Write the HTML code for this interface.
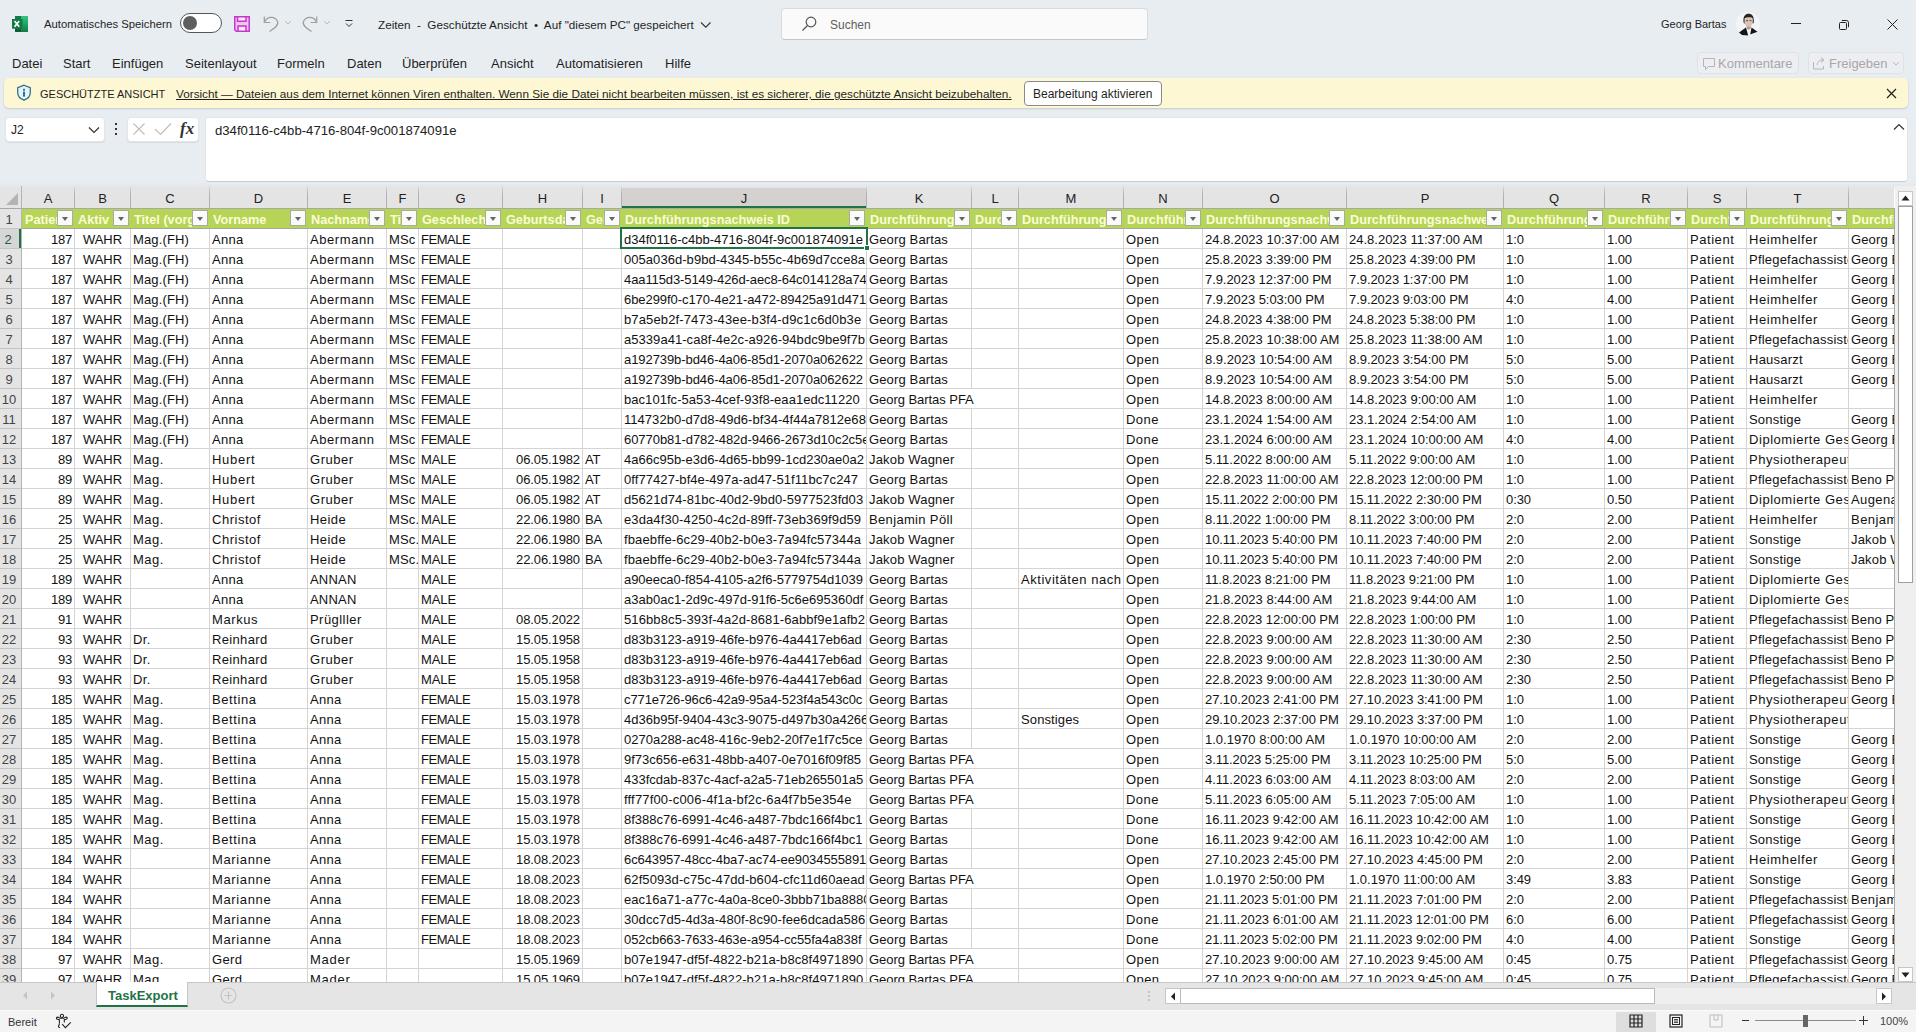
<!DOCTYPE html><html><head><meta charset="utf-8"><title>Zeiten</title><style>*{box-sizing:border-box;margin:0;padding:0}
html,body{width:1916px;height:1032px;overflow:hidden}
body{position:relative;background:#e8edf1;font-family:"Liberation Sans",sans-serif;color:#1f1f1f}
.abs{position:absolute}
.t{position:absolute;white-space:nowrap;line-height:1}
#grid{position:absolute;left:0;top:0;width:1916px;height:1032px;pointer-events:none}
.colhdr{position:absolute;background:#e4e4e4}
.ch{position:absolute;top:188px;height:20px;background:#e4e4e4;font-size:13px;line-height:18px;padding-top:2px;text-align:center;color:#222}
.ch.sel{background:#d3d2d0;border-bottom:2px solid #217346;color:#1e1e1e}
.vl{position:absolute;width:1px;background:linear-gradient(#dcdcdc,#b0b0b0 40%)}
.hlr{position:absolute;left:0;width:21px;height:1px;background:#c4c4c4}
.rh{position:absolute;left:0;width:21px;background:#e4e4e4;font-size:13px;line-height:19px;text-align:center;color:#444;padding:1px 3px 0 0}
.rh.sel{background:#d6d6d6;border-right:2px solid #217346;color:#2d5a43}
.hl{position:absolute;left:0;width:1894px;height:1px;background:#d4d4d4}
.vlb{position:absolute;top:208px;height:774px;width:1px;background:#d4d4d4}
.thdr{position:absolute;height:19px;background:#b6d456}
.hc{position:absolute;height:19px;overflow:hidden;white-space:nowrap;font-size:12.7px;font-weight:bold;color:#fbfdd8;line-height:19px;padding:2px 0 0 3px}
.fb{position:absolute;width:16px;height:16px;background:#fafafa;border:1px solid #a9ab9f}
.fb i{position:absolute;left:4px;top:6px;width:0;height:0;border-left:3.5px solid transparent;border-right:3.5px solid transparent;border-top:4px solid #666}
.c{position:absolute;height:19px;overflow:hidden;white-space:nowrap;font-size:13px;color:#111;line-height:19px;padding:1px 2px 0 2px;background:#fff}
.c.r{text-align:right}
.c.ctr{text-align:center}
</style></head><body><!-- title bar -->
<svg class="abs" style="left:12px;top:16px" width="17" height="16" viewBox="0 0 17 16"><defs><linearGradient id="xg" x1="0" y1="0" x2="0" y2="1"><stop offset="0" stop-color="#33c481"/><stop offset=".5" stop-color="#21a366"/><stop offset="1" stop-color="#107c41"/></linearGradient></defs><rect x="3" y="0" width="13" height="16" fill="#107c41"/><rect x="9" y="0" width="7" height="16" fill="url(#xg)"/><rect x="3" y="13" width="6" height="3" fill="#185c37"/><rect x="0" y="3" width="10.5" height="9.7" fill="#107c41"/><path d="M2.6 5l4.6 5.8M7.2 5l-4.6 5.8" stroke="#fff" stroke-width="1.7"/></svg>
<div class="t" style="left:44px;top:19px;font-size:11.3px;color:#1f1f1f">Automatisches Speichern</div>
<div class="abs" style="left:180px;top:13px;width:42px;height:20px;border:1px solid #555;border-radius:10px;background:#fff"><div class="abs" style="left:2px;top:2px;width:14px;height:14px;border-radius:50%;background:#5e5e5e"></div></div>
<svg class="abs" style="left:233px;top:15px" width="18" height="18" viewBox="0 0 18 18"><path d="M1.75 1.75h14.5v14.5h-13l-1.5-1.5z" fill="#f3c2f3" stroke="#c23ac7" stroke-width="1.5"/><rect x="4.5" y="1.75" width="8.5" height="4.5" fill="#fde9fd" stroke="#c23ac7" stroke-width="1.5"/><rect x="5" y="11" width="8" height="5.25" fill="#fde9fd" stroke="#c23ac7" stroke-width="1.5"/></svg>
<svg class="abs" style="left:260px;top:14px" width="22" height="20" viewBox="0 0 22 20"><path d="M4.3 2.5v6h6" fill="none" stroke="#9d9d9d" stroke-width="1.2"/><path d="M5 7.5C7 2.5 15 1.5 17.5 7.5 19 11 15 14 9.5 17.5" fill="none" stroke="#9d9d9d" stroke-width="1.2"/></svg>
<svg class="abs" style="left:284px;top:20px" width="8" height="6"><path d="M1 1l3 3 3-3" fill="none" stroke="#b8b8b8"/></svg>
<svg class="abs" style="left:300px;top:14px" width="22" height="20" viewBox="0 0 22 20"><path d="M16.7 2.5v6h-6" fill="none" stroke="#9d9d9d" stroke-width="1.2"/><path d="M16 7.5C14 2.5 6 1.5 3.5 7.5 2 11 6 14 11.5 17.5" fill="none" stroke="#9d9d9d" stroke-width="1.2"/></svg>
<svg class="abs" style="left:323px;top:20px" width="8" height="6"><path d="M1 1l3 3 3-3" fill="none" stroke="#b8b8b8"/></svg>
<svg class="abs" style="left:344px;top:19px" width="10" height="10"><path d="M1.5 1.5h7M2 4.5l3 3 3-3" fill="none" stroke="#333" stroke-width="1"/></svg>
<div class="t" style="left:378px;top:19px;font-size:11.7px;color:#1f1f1f">Zeiten&nbsp; -&nbsp; Geschützte Ansicht&nbsp; •&nbsp; Auf "diesem PC" gespeichert</div>
<svg class="abs" style="left:700px;top:21px" width="12" height="8"><path d="M1 1.5l4.75 4.75 4.75-4.75" fill="none" stroke="#333" stroke-width="1.1"/></svg>
<div class="abs" style="left:781px;top:8px;width:367px;height:32px;background:#fafafa;border:1px solid #d8dadd;border-bottom-color:#c5c7ca;border-radius:4px"></div>
<svg class="abs" style="left:801px;top:16px" width="16" height="16" viewBox="0 0 16 16"><circle cx="10" cy="6" r="4.8" fill="none" stroke="#555" stroke-width="1.2"/><path d="M6.5 9.5L1.5 14.5" stroke="#555" stroke-width="1.3"/></svg>
<div class="t" style="left:830px;top:19px;font-size:12px;color:#5f5f5f">Suchen</div>
<div class="t" style="left:1661px;top:19px;font-size:11px;color:#1f1f1f">Georg Bartas</div>
<svg class="abs" style="left:1736px;top:12px" width="24" height="24" viewBox="0 0 24 24"><circle cx="12" cy="12" r="12" fill="#f3f4f6"/><ellipse cx="12.6" cy="9.8" rx="3.9" ry="5.2" fill="#dcc2b6"/><path d="M7.6 10.5C6.8 4 9.5 1.8 12.6 1.8 16 1.8 18.2 4 17.8 10.5L16.8 12 16.6 6.2C15 5 10.5 5 8.6 6.5L8.6 12z" fill="#2b2320"/><rect x="10.2" y="8.2" width="1.8" height=".9" fill="#4a302a"/><rect x="13.6" y="8.2" width="1.8" height=".9" fill="#4a302a"/><path d="M10.4 14.5h4.6l-.6 2.6-1.7.6-1.7-.6z" fill="#b59a90"/><path d="M3 20.5L10 15.5 12.2 23.5 6 23z" fill="#151515"/><path d="M21.5 19.8L15.5 15.5 14.2 22.5z" fill="#151515"/></svg>
<div class="abs" style="left:1791px;top:23px;width:10px;height:1px;background:#222"></div>
<svg class="abs" style="left:1838px;top:18px" width="12" height="12" viewBox="0 0 12 12"><rect x="1.5" y="4.5" width="7" height="7" rx="1" fill="none" stroke="#222" stroke-width="1"/><path d="M3.8 2.5h4.7a2 2 0 0 1 2 2v4.7" fill="none" stroke="#222"/></svg>
<svg class="abs" style="left:1887px;top:19px" width="11" height="11" viewBox="0 0 11 11"><path d="M0.5 0.5l10 10M10.5 0.5l-10 10" stroke="#222" stroke-width="1"/></svg>
<!-- menu -->
<div class="t" style="left:12px;top:57px;font-size:13px">Datei</div>
<div class="t" style="left:63px;top:57px;font-size:13px">Start</div>
<div class="t" style="left:112px;top:57px;font-size:13px">Einfügen</div>
<div class="t" style="left:185px;top:57px;font-size:13px">Seitenlayout</div>
<div class="t" style="left:277px;top:57px;font-size:13px">Formeln</div>
<div class="t" style="left:347px;top:57px;font-size:13px">Daten</div>
<div class="t" style="left:402px;top:57px;font-size:13px">Überprüfen</div>
<div class="t" style="left:491px;top:57px;font-size:13px">Ansicht</div>
<div class="t" style="left:556px;top:57px;font-size:13px">Automatisieren</div>
<div class="t" style="left:665px;top:57px;font-size:13px">Hilfe</div>
<div class="abs" style="left:1697px;top:52px;width:102px;height:22px;border:1px solid #dfe1e4;border-radius:4px;background:#eceef2"></div>
<svg class="abs" style="left:1702px;top:57px" width="14" height="14" viewBox="0 0 14 14"><path d="M1.5 1.5h11v8h-6l-3 3v-3h-2z" fill="none" stroke="#b5b5b5"/></svg>
<div class="t" style="left:1718px;top:57px;font-size:13px;color:#a8a8a8">Kommentare</div>
<div class="abs" style="left:1808px;top:52px;width:96px;height:22px;border:1px solid #dfe1e4;border-radius:4px;background:#eceef2"></div>
<svg class="abs" style="left:1812px;top:56px" width="14" height="14" viewBox="0 0 14 14"><path d="M1.5 6v7h10v-3M5 9c1-4 3-5 6-5M9 1.5l3 2.5-3 2.5" fill="none" stroke="#b5b5b5"/></svg>
<div class="t" style="left:1829px;top:57px;font-size:13px;color:#a8a8a8">Freigeben</div>
<svg class="abs" style="left:1892px;top:61px" width="8" height="6"><path d="M1 1l3 3 3-3" fill="none" stroke="#b5b5b5"/></svg>
<!-- protected view bar -->
<div class="abs" style="left:4px;top:78px;width:1904px;height:30px;background:#fdf8d3;border-radius:5px;box-shadow:0 1px 2px rgba(0,0,0,.15)"></div>
<svg class="abs" style="left:16px;top:84px" width="16" height="17" viewBox="0 0 16 17"><path d="M8 1.2l6.3 2.5v4.8c0 4-3 6.5-6.3 7.6-3.3-1.1-6.3-3.6-6.3-7.6V3.7z" fill="#def5fb" stroke="#2f6580" stroke-width="1.2"/><rect x="7.1" y="4.8" width="1.8" height="1.8" fill="#2b5d76"/><rect x="7.1" y="7.6" width="1.8" height="5" fill="#2b5d76"/></svg>
<div class="t" style="left:40px;top:89px;font-size:11px;color:#1f1f1f">GESCHÜTZTE ANSICHT</div>
<div class="t" style="left:176px;top:88px;font-size:11.75px;color:#1f1f1f;text-decoration:underline">Vorsicht — Dateien aus dem Internet können Viren enthalten. Wenn Sie die Datei nicht bearbeiten müssen, ist es sicherer, die geschützte Ansicht beizubehalten.</div>
<div class="abs" style="left:1024px;top:81px;width:138px;height:25px;background:#fff;border:1px solid #8a8a8a;border-radius:4px"></div>
<div class="t" style="left:1033px;top:88px;font-size:12px;color:#1f1f1f">Bearbeitung aktivieren</div>
<svg class="abs" style="left:1886px;top:88px" width="11" height="11"><path d="M1 1l9 9M10 1L1 10" stroke="#222" stroke-width="1.2"/></svg>
<!-- formula bar -->
<div class="abs" style="left:5px;top:117px;width:100px;height:25px;background:#fff;border:1px solid #e3e5e8;border-radius:4px;box-shadow:0 1px 1px rgba(0,0,0,.08)"></div>
<div class="t" style="left:11px;top:123.5px;font-size:12px;color:#222">J2</div>
<svg class="abs" style="left:88px;top:126px" width="12" height="8"><path d="M1 1.5l5 5 5-5" fill="none" stroke="#333" stroke-width="1.2"/></svg>
<div class="abs" style="left:115px;top:123px;width:2px;height:2px;background:#333"></div>
<div class="abs" style="left:115px;top:128px;width:2px;height:2px;background:#333"></div>
<div class="abs" style="left:115px;top:133px;width:2px;height:2px;background:#333"></div>
<div class="abs" style="left:127px;top:117px;width:72px;height:25px;background:#fff;border:1px solid #e3e5e8;border-radius:4px;box-shadow:0 1px 1px rgba(0,0,0,.08)"></div>
<svg class="abs" style="left:132px;top:122px" width="14" height="14"><path d="M1.5 1.5l11 11M12.5 1.5l-11 11" stroke="#bdbdbd" stroke-width="1.1"/></svg>
<svg class="abs" style="left:154px;top:122px" width="18" height="14"><path d="M1 7l5.5 5.5 10.5-11" fill="none" stroke="#bdbdbd" stroke-width="1.1"/></svg>
<div class="t" style="left:180px;top:120px;font-size:17px;font-family:'Liberation Serif',serif;font-style:italic;font-weight:bold;color:#333">fx</div>
<div class="abs" style="left:205px;top:117px;width:1703px;height:65px;background:#fff;border:1px solid #e3e5e8;border-bottom-color:#c9cbce;border-radius:4px"></div>
<div class="t" style="left:215px;top:123.5px;font-size:13.15px;color:#222">d34f0116-c4bb-4716-804f-9c001874091e</div>
<svg class="abs" style="left:1893px;top:123px" width="12" height="8"><path d="M1 6.5l5-5 5 5" fill="none" stroke="#333" stroke-width="1.2"/></svg>
<!-- grid container background -->
<div class="abs" style="left:0;top:182px;width:1916px;height:6px;background:linear-gradient(#e8edf1,#e4e5e7)"></div>
<div class="abs" style="left:0;top:188px;width:1916px;height:795px;background:#fff"></div>
<div id="grid"><div class="colhdr" style="left:0;top:188px;width:1894px;height:20px"></div><svg style="position:absolute;left:6px;top:193px" width="12" height="12"><polygon points="12,0 12,12 0,12" fill="#b4b4b4"/></svg><div class="ch" style="left:22px;width:52px">A</div><div class="vl" style="left:21px;top:186px;height:22px"></div><div class="ch" style="left:75px;width:55px">B</div><div class="vl" style="left:74px;top:186px;height:22px"></div><div class="ch" style="left:131px;width:78px">C</div><div class="vl" style="left:130px;top:186px;height:22px"></div><div class="ch" style="left:210px;width:97px">D</div><div class="vl" style="left:209px;top:186px;height:22px"></div><div class="ch" style="left:308px;width:78px">E</div><div class="vl" style="left:307px;top:186px;height:22px"></div><div class="ch" style="left:387px;width:31px">F</div><div class="vl" style="left:386px;top:186px;height:22px"></div><div class="ch" style="left:419px;width:83px">G</div><div class="vl" style="left:418px;top:186px;height:22px"></div><div class="ch" style="left:503px;width:79px">H</div><div class="vl" style="left:502px;top:186px;height:22px"></div><div class="ch" style="left:583px;width:38px">I</div><div class="vl" style="left:582px;top:186px;height:22px"></div><div class="ch sel" style="left:622px;width:244px">J</div><div class="vl" style="left:621px;top:186px;height:22px"></div><div class="ch" style="left:867px;width:104px">K</div><div class="vl" style="left:866px;top:186px;height:22px"></div><div class="ch" style="left:972px;width:46px">L</div><div class="vl" style="left:971px;top:186px;height:22px"></div><div class="ch" style="left:1019px;width:104px">M</div><div class="vl" style="left:1018px;top:186px;height:22px"></div><div class="ch" style="left:1124px;width:78px">N</div><div class="vl" style="left:1123px;top:186px;height:22px"></div><div class="ch" style="left:1203px;width:143px">O</div><div class="vl" style="left:1202px;top:186px;height:22px"></div><div class="ch" style="left:1347px;width:156px">P</div><div class="vl" style="left:1346px;top:186px;height:22px"></div><div class="ch" style="left:1504px;width:100px">Q</div><div class="vl" style="left:1503px;top:186px;height:22px"></div><div class="ch" style="left:1605px;width:82px">R</div><div class="vl" style="left:1604px;top:186px;height:22px"></div><div class="ch" style="left:1688px;width:58px">S</div><div class="vl" style="left:1687px;top:186px;height:22px"></div><div class="ch" style="left:1747px;width:101px">T</div><div class="vl" style="left:1746px;top:186px;height:22px"></div><div class="ch" style="left:1849px;width:45px"></div><div class="vl" style="left:1848px;top:186px;height:22px"></div><div class="rh" style="top:209px;height:19px">1</div><div class="rh sel" style="top:229px;height:19px">2</div><div class="rh" style="top:249px;height:19px">3</div><div class="rh" style="top:269px;height:19px">4</div><div class="rh" style="top:289px;height:19px">5</div><div class="rh" style="top:309px;height:19px">6</div><div class="rh" style="top:329px;height:19px">7</div><div class="rh" style="top:349px;height:19px">8</div><div class="rh" style="top:369px;height:19px">9</div><div class="rh" style="top:389px;height:19px">10</div><div class="rh" style="top:409px;height:19px">11</div><div class="rh" style="top:429px;height:19px">12</div><div class="rh" style="top:449px;height:19px">13</div><div class="rh" style="top:469px;height:19px">14</div><div class="rh" style="top:489px;height:19px">15</div><div class="rh" style="top:509px;height:19px">16</div><div class="rh" style="top:529px;height:19px">17</div><div class="rh" style="top:549px;height:19px">18</div><div class="rh" style="top:569px;height:19px">19</div><div class="rh" style="top:589px;height:19px">20</div><div class="rh" style="top:609px;height:19px">21</div><div class="rh" style="top:629px;height:19px">22</div><div class="rh" style="top:649px;height:19px">23</div><div class="rh" style="top:669px;height:19px">24</div><div class="rh" style="top:689px;height:19px">25</div><div class="rh" style="top:709px;height:19px">26</div><div class="rh" style="top:729px;height:19px">27</div><div class="rh" style="top:749px;height:19px">28</div><div class="rh" style="top:769px;height:19px">29</div><div class="rh" style="top:789px;height:19px">30</div><div class="rh" style="top:809px;height:19px">31</div><div class="rh" style="top:829px;height:19px">32</div><div class="rh" style="top:849px;height:19px">33</div><div class="rh" style="top:869px;height:19px">34</div><div class="rh" style="top:889px;height:19px">35</div><div class="rh" style="top:909px;height:19px">36</div><div class="rh" style="top:929px;height:19px">37</div><div class="rh" style="top:949px;height:19px">38</div><div class="rh" style="top:969px;height:13px">39</div><div class="hl" style="top:208px"></div><div class="hlr" style="top:208px"></div><div class="hl" style="top:228px"></div><div class="hlr" style="top:228px"></div><div class="hl" style="top:248px"></div><div class="hlr" style="top:248px"></div><div class="hl" style="top:268px"></div><div class="hlr" style="top:268px"></div><div class="hl" style="top:288px"></div><div class="hlr" style="top:288px"></div><div class="hl" style="top:308px"></div><div class="hlr" style="top:308px"></div><div class="hl" style="top:328px"></div><div class="hlr" style="top:328px"></div><div class="hl" style="top:348px"></div><div class="hlr" style="top:348px"></div><div class="hl" style="top:368px"></div><div class="hlr" style="top:368px"></div><div class="hl" style="top:388px"></div><div class="hlr" style="top:388px"></div><div class="hl" style="top:408px"></div><div class="hlr" style="top:408px"></div><div class="hl" style="top:428px"></div><div class="hlr" style="top:428px"></div><div class="hl" style="top:448px"></div><div class="hlr" style="top:448px"></div><div class="hl" style="top:468px"></div><div class="hlr" style="top:468px"></div><div class="hl" style="top:488px"></div><div class="hlr" style="top:488px"></div><div class="hl" style="top:508px"></div><div class="hlr" style="top:508px"></div><div class="hl" style="top:528px"></div><div class="hlr" style="top:528px"></div><div class="hl" style="top:548px"></div><div class="hlr" style="top:548px"></div><div class="hl" style="top:568px"></div><div class="hlr" style="top:568px"></div><div class="hl" style="top:588px"></div><div class="hlr" style="top:588px"></div><div class="hl" style="top:608px"></div><div class="hlr" style="top:608px"></div><div class="hl" style="top:628px"></div><div class="hlr" style="top:628px"></div><div class="hl" style="top:648px"></div><div class="hlr" style="top:648px"></div><div class="hl" style="top:668px"></div><div class="hlr" style="top:668px"></div><div class="hl" style="top:688px"></div><div class="hlr" style="top:688px"></div><div class="hl" style="top:708px"></div><div class="hlr" style="top:708px"></div><div class="hl" style="top:728px"></div><div class="hlr" style="top:728px"></div><div class="hl" style="top:748px"></div><div class="hlr" style="top:748px"></div><div class="hl" style="top:768px"></div><div class="hlr" style="top:768px"></div><div class="hl" style="top:788px"></div><div class="hlr" style="top:788px"></div><div class="hl" style="top:808px"></div><div class="hlr" style="top:808px"></div><div class="hl" style="top:828px"></div><div class="hlr" style="top:828px"></div><div class="hl" style="top:848px"></div><div class="hlr" style="top:848px"></div><div class="hl" style="top:868px"></div><div class="hlr" style="top:868px"></div><div class="hl" style="top:888px"></div><div class="hlr" style="top:888px"></div><div class="hl" style="top:908px"></div><div class="hlr" style="top:908px"></div><div class="hl" style="top:928px"></div><div class="hlr" style="top:928px"></div><div class="hl" style="top:948px"></div><div class="hlr" style="top:948px"></div><div class="hl" style="top:968px"></div><div class="hlr" style="top:968px"></div><div class="vlb" style="left:21px"></div><div class="vlb" style="left:74px"></div><div class="vlb" style="left:130px"></div><div class="vlb" style="left:209px"></div><div class="vlb" style="left:307px"></div><div class="vlb" style="left:386px"></div><div class="vlb" style="left:418px"></div><div class="vlb" style="left:502px"></div><div class="vlb" style="left:582px"></div><div class="vlb" style="left:621px"></div><div class="vlb" style="left:866px"></div><div class="vlb" style="left:971px"></div><div class="vlb" style="left:1018px"></div><div class="vlb" style="left:1123px"></div><div class="vlb" style="left:1202px"></div><div class="vlb" style="left:1346px"></div><div class="vlb" style="left:1503px"></div><div class="vlb" style="left:1604px"></div><div class="vlb" style="left:1687px"></div><div class="vlb" style="left:1746px"></div><div class="vlb" style="left:1848px"></div><div class="vlb" style="left:1894px"></div><div class="abs" style="left:0;top:208px;width:1894px;height:1px;background:#a8a8a8"></div><div class="abs" style="left:22px;top:228px;width:1872px;height:1px;background:#a3a89a"></div><div class="abs" style="left:21px;top:186px;width:1px;height:796px;background:#b4b4b4"></div><div class="thdr" style="left:22px;top:209px;width:1872px"></div><div class="hc" style="left:22px;top:209px;width:35px">Patient-ID</div><div class="fb" style="left:57px;top:210px"><i></i></div><div class="hc" style="left:75px;top:209px;width:38px">Aktiv</div><div class="fb" style="left:113px;top:210px"><i></i></div><div class="hc" style="left:131px;top:209px;width:61px">Titel (vorgestellt)</div><div class="fb" style="left:192px;top:210px"><i></i></div><div class="hc" style="left:210px;top:209px;width:80px">Vorname</div><div class="fb" style="left:290px;top:210px"><i></i></div><div class="hc" style="left:308px;top:209px;width:61px">Nachname</div><div class="fb" style="left:369px;top:210px"><i></i></div><div class="hc" style="left:387px;top:209px;width:14px">Titel (nachgestellt)</div><div class="fb" style="left:401px;top:210px"><i></i></div><div class="hc" style="left:419px;top:209px;width:66px">Geschlecht</div><div class="fb" style="left:485px;top:210px"><i></i></div><div class="hc" style="left:503px;top:209px;width:62px">Geburtsdatum</div><div class="fb" style="left:565px;top:210px"><i></i></div><div class="hc" style="left:583px;top:209px;width:21px">Geburtsland</div><div class="fb" style="left:604px;top:210px"><i></i></div><div class="hc" style="left:622px;top:209px;width:227px">Durchführungsnachweis ID</div><div class="fb" style="left:849px;top:210px"><i></i></div><div class="hc" style="left:867px;top:209px;width:87px">Durchführung</div><div class="fb" style="left:954px;top:210px"><i></i></div><div class="hc" style="left:972px;top:209px;width:29px">Durchführung</div><div class="fb" style="left:1001px;top:210px"><i></i></div><div class="hc" style="left:1019px;top:209px;width:87px">Durchführung</div><div class="fb" style="left:1106px;top:210px"><i></i></div><div class="hc" style="left:1124px;top:209px;width:61px">Durchführung</div><div class="fb" style="left:1185px;top:210px"><i></i></div><div class="hc" style="left:1203px;top:209px;width:126px">Durchführungsnachweis</div><div class="fb" style="left:1329px;top:210px"><i></i></div><div class="hc" style="left:1347px;top:209px;width:139px">Durchführungsnachweis</div><div class="fb" style="left:1486px;top:210px"><i></i></div><div class="hc" style="left:1504px;top:209px;width:83px">Durchführung</div><div class="fb" style="left:1587px;top:210px"><i></i></div><div class="hc" style="left:1605px;top:209px;width:65px">Durchführung</div><div class="fb" style="left:1670px;top:210px"><i></i></div><div class="hc" style="left:1688px;top:209px;width:41px">Durchführung</div><div class="fb" style="left:1729px;top:210px"><i></i></div><div class="hc" style="left:1747px;top:209px;width:84px">Durchführung</div><div class="fb" style="left:1831px;top:210px"><i></i></div><div class="hc" style="left:1849px;top:209px;width:45px">Durchführung</div><div class="c r" style="left:22px;top:229px;width:52px;letter-spacing:-0.23px">187</div><div class="c ctr" style="left:75px;top:229px;width:55px;letter-spacing:-0.05px">WAHR</div><div class="c" style="left:131px;top:229px;width:78px;letter-spacing:0.15px">Mag.(FH)</div><div class="c" style="left:210px;top:229px;width:97px;letter-spacing:0.33px">Anna</div><div class="c" style="left:308px;top:229px;width:78px;letter-spacing:0.57px">Abermann</div><div class="c" style="left:387px;top:229px;width:31px;letter-spacing:0.07px">MSc</div><div class="c" style="left:419px;top:229px;width:83px;letter-spacing:-0.45px">FEMALE</div><div class="c" style="left:622px;top:229px;width:244px">d34f0116-c4bb-4716-804f-9c001874091e</div><div class="c" style="left:867px;top:229px;width:104px;letter-spacing:0.14px">Georg Bartas</div><div class="c" style="left:1124px;top:229px;width:78px;letter-spacing:0.42px">Open</div><div class="c" style="left:1203px;top:229px;width:143px">24.8.2023 10:37:00 AM</div><div class="c" style="left:1347px;top:229px;width:156px">24.8.2023 11:37:00 AM</div><div class="c" style="left:1504px;top:229px;width:100px">1:0</div><div class="c" style="left:1605px;top:229px;width:82px;letter-spacing:-0.08px">1.00</div><div class="c" style="left:1688px;top:229px;width:58px;letter-spacing:0.55px">Patient</div><div class="c" style="left:1747px;top:229px;width:101px;letter-spacing:0.62px">Heimhelfer</div><div class="c" style="left:1849px;top:229px;width:45px;letter-spacing:0.14px">Georg Bartas</div><div class="c r" style="left:22px;top:249px;width:52px;letter-spacing:-0.23px">187</div><div class="c ctr" style="left:75px;top:249px;width:55px;letter-spacing:-0.05px">WAHR</div><div class="c" style="left:131px;top:249px;width:78px;letter-spacing:0.15px">Mag.(FH)</div><div class="c" style="left:210px;top:249px;width:97px;letter-spacing:0.33px">Anna</div><div class="c" style="left:308px;top:249px;width:78px;letter-spacing:0.57px">Abermann</div><div class="c" style="left:387px;top:249px;width:31px;letter-spacing:0.07px">MSc</div><div class="c" style="left:419px;top:249px;width:83px;letter-spacing:-0.45px">FEMALE</div><div class="c" style="left:622px;top:249px;width:244px;letter-spacing:0.05px">005a036d-b9bd-4345-b55c-4b69d7cce8a</div><div class="c" style="left:867px;top:249px;width:104px;letter-spacing:0.14px">Georg Bartas</div><div class="c" style="left:1124px;top:249px;width:78px;letter-spacing:0.42px">Open</div><div class="c" style="left:1203px;top:249px;width:143px;letter-spacing:-0.07px">25.8.2023 3:39:00 PM</div><div class="c" style="left:1347px;top:249px;width:156px;letter-spacing:-0.07px">25.8.2023 4:39:00 PM</div><div class="c" style="left:1504px;top:249px;width:100px">1:0</div><div class="c" style="left:1605px;top:249px;width:82px;letter-spacing:-0.08px">1.00</div><div class="c" style="left:1688px;top:249px;width:58px;letter-spacing:0.55px">Patient</div><div class="c" style="left:1747px;top:249px;width:101px;letter-spacing:0.21px">Pflegefachassistenz</div><div class="c" style="left:1849px;top:249px;width:45px;letter-spacing:0.14px">Georg Bartas</div><div class="c r" style="left:22px;top:269px;width:52px;letter-spacing:-0.23px">187</div><div class="c ctr" style="left:75px;top:269px;width:55px;letter-spacing:-0.05px">WAHR</div><div class="c" style="left:131px;top:269px;width:78px;letter-spacing:0.15px">Mag.(FH)</div><div class="c" style="left:210px;top:269px;width:97px;letter-spacing:0.33px">Anna</div><div class="c" style="left:308px;top:269px;width:78px;letter-spacing:0.57px">Abermann</div><div class="c" style="left:387px;top:269px;width:31px;letter-spacing:0.07px">MSc</div><div class="c" style="left:419px;top:269px;width:83px;letter-spacing:-0.45px">FEMALE</div><div class="c" style="left:622px;top:269px;width:244px;letter-spacing:-0.10px">4aa115d3-5149-426d-aec8-64c014128a74</div><div class="c" style="left:867px;top:269px;width:104px;letter-spacing:0.14px">Georg Bartas</div><div class="c" style="left:1124px;top:269px;width:78px;letter-spacing:0.42px">Open</div><div class="c" style="left:1203px;top:269px;width:143px;letter-spacing:-0.07px">7.9.2023 12:37:00 PM</div><div class="c" style="left:1347px;top:269px;width:156px;letter-spacing:-0.06px">7.9.2023 1:37:00 PM</div><div class="c" style="left:1504px;top:269px;width:100px">1:0</div><div class="c" style="left:1605px;top:269px;width:82px;letter-spacing:-0.08px">1.00</div><div class="c" style="left:1688px;top:269px;width:58px;letter-spacing:0.55px">Patient</div><div class="c" style="left:1747px;top:269px;width:101px;letter-spacing:0.62px">Heimhelfer</div><div class="c" style="left:1849px;top:269px;width:45px;letter-spacing:0.14px">Georg Bartas</div><div class="c r" style="left:22px;top:289px;width:52px;letter-spacing:-0.23px">187</div><div class="c ctr" style="left:75px;top:289px;width:55px;letter-spacing:-0.05px">WAHR</div><div class="c" style="left:131px;top:289px;width:78px;letter-spacing:0.15px">Mag.(FH)</div><div class="c" style="left:210px;top:289px;width:97px;letter-spacing:0.33px">Anna</div><div class="c" style="left:308px;top:289px;width:78px;letter-spacing:0.57px">Abermann</div><div class="c" style="left:387px;top:289px;width:31px;letter-spacing:0.07px">MSc</div><div class="c" style="left:419px;top:289px;width:83px;letter-spacing:-0.45px">FEMALE</div><div class="c" style="left:622px;top:289px;width:244px;letter-spacing:-0.06px">6be299f0-c170-4e21-a472-89425a91d471</div><div class="c" style="left:867px;top:289px;width:104px;letter-spacing:0.14px">Georg Bartas</div><div class="c" style="left:1124px;top:289px;width:78px;letter-spacing:0.42px">Open</div><div class="c" style="left:1203px;top:289px;width:143px;letter-spacing:-0.06px">7.9.2023 5:03:00 PM</div><div class="c" style="left:1347px;top:289px;width:156px;letter-spacing:-0.06px">7.9.2023 9:03:00 PM</div><div class="c" style="left:1504px;top:289px;width:100px">4:0</div><div class="c" style="left:1605px;top:289px;width:82px;letter-spacing:-0.08px">4.00</div><div class="c" style="left:1688px;top:289px;width:58px;letter-spacing:0.55px">Patient</div><div class="c" style="left:1747px;top:289px;width:101px;letter-spacing:0.62px">Heimhelfer</div><div class="c" style="left:1849px;top:289px;width:45px;letter-spacing:0.14px">Georg Bartas</div><div class="c r" style="left:22px;top:309px;width:52px;letter-spacing:-0.23px">187</div><div class="c ctr" style="left:75px;top:309px;width:55px;letter-spacing:-0.05px">WAHR</div><div class="c" style="left:131px;top:309px;width:78px;letter-spacing:0.15px">Mag.(FH)</div><div class="c" style="left:210px;top:309px;width:97px;letter-spacing:0.33px">Anna</div><div class="c" style="left:308px;top:309px;width:78px;letter-spacing:0.57px">Abermann</div><div class="c" style="left:387px;top:309px;width:31px;letter-spacing:0.07px">MSc</div><div class="c" style="left:419px;top:309px;width:83px;letter-spacing:-0.45px">FEMALE</div><div class="c" style="left:622px;top:309px;width:244px;letter-spacing:0.13px">b7a5eb2f-7473-43ee-b3f4-d9c1c6d0b3e</div><div class="c" style="left:867px;top:309px;width:104px;letter-spacing:0.14px">Georg Bartas</div><div class="c" style="left:1124px;top:309px;width:78px;letter-spacing:0.42px">Open</div><div class="c" style="left:1203px;top:309px;width:143px;letter-spacing:-0.07px">24.8.2023 4:38:00 PM</div><div class="c" style="left:1347px;top:309px;width:156px;letter-spacing:-0.07px">24.8.2023 5:38:00 PM</div><div class="c" style="left:1504px;top:309px;width:100px">1:0</div><div class="c" style="left:1605px;top:309px;width:82px;letter-spacing:-0.08px">1.00</div><div class="c" style="left:1688px;top:309px;width:58px;letter-spacing:0.55px">Patient</div><div class="c" style="left:1747px;top:309px;width:101px;letter-spacing:0.62px">Heimhelfer</div><div class="c" style="left:1849px;top:309px;width:45px;letter-spacing:0.14px">Georg Bartas</div><div class="c r" style="left:22px;top:329px;width:52px;letter-spacing:-0.23px">187</div><div class="c ctr" style="left:75px;top:329px;width:55px;letter-spacing:-0.05px">WAHR</div><div class="c" style="left:131px;top:329px;width:78px;letter-spacing:0.15px">Mag.(FH)</div><div class="c" style="left:210px;top:329px;width:97px;letter-spacing:0.33px">Anna</div><div class="c" style="left:308px;top:329px;width:78px;letter-spacing:0.57px">Abermann</div><div class="c" style="left:387px;top:329px;width:31px;letter-spacing:0.07px">MSc</div><div class="c" style="left:419px;top:329px;width:83px;letter-spacing:-0.45px">FEMALE</div><div class="c" style="left:622px;top:329px;width:244px;letter-spacing:0.05px">a5339a41-ca8f-4e2c-a926-94bdc9be9f7b</div><div class="c" style="left:867px;top:329px;width:104px;letter-spacing:0.14px">Georg Bartas</div><div class="c" style="left:1124px;top:329px;width:78px;letter-spacing:0.42px">Open</div><div class="c" style="left:1203px;top:329px;width:143px">25.8.2023 10:38:00 AM</div><div class="c" style="left:1347px;top:329px;width:156px">25.8.2023 11:38:00 AM</div><div class="c" style="left:1504px;top:329px;width:100px">1:0</div><div class="c" style="left:1605px;top:329px;width:82px;letter-spacing:-0.08px">1.00</div><div class="c" style="left:1688px;top:329px;width:58px;letter-spacing:0.55px">Patient</div><div class="c" style="left:1747px;top:329px;width:101px;letter-spacing:0.21px">Pflegefachassistenz</div><div class="c" style="left:1849px;top:329px;width:45px;letter-spacing:0.14px">Georg Bartas</div><div class="c r" style="left:22px;top:349px;width:52px;letter-spacing:-0.23px">187</div><div class="c ctr" style="left:75px;top:349px;width:55px;letter-spacing:-0.05px">WAHR</div><div class="c" style="left:131px;top:349px;width:78px;letter-spacing:0.15px">Mag.(FH)</div><div class="c" style="left:210px;top:349px;width:97px;letter-spacing:0.33px">Anna</div><div class="c" style="left:308px;top:349px;width:78px;letter-spacing:0.57px">Abermann</div><div class="c" style="left:387px;top:349px;width:31px;letter-spacing:0.07px">MSc</div><div class="c" style="left:419px;top:349px;width:83px;letter-spacing:-0.45px">FEMALE</div><div class="c" style="left:622px;top:349px;width:244px;letter-spacing:-0.07px">a192739b-bd46-4a06-85d1-2070a062622</div><div class="c" style="left:867px;top:349px;width:104px;letter-spacing:0.14px">Georg Bartas</div><div class="c" style="left:1124px;top:349px;width:78px;letter-spacing:0.42px">Open</div><div class="c" style="left:1203px;top:349px;width:143px">8.9.2023 10:54:00 AM</div><div class="c" style="left:1347px;top:349px;width:156px;letter-spacing:-0.06px">8.9.2023 3:54:00 PM</div><div class="c" style="left:1504px;top:349px;width:100px">5:0</div><div class="c" style="left:1605px;top:349px;width:82px;letter-spacing:-0.08px">5.00</div><div class="c" style="left:1688px;top:349px;width:58px;letter-spacing:0.55px">Patient</div><div class="c" style="left:1747px;top:349px;width:101px;letter-spacing:0.24px">Hausarzt</div><div class="c" style="left:1849px;top:349px;width:45px;letter-spacing:0.14px">Georg Bartas</div><div class="c r" style="left:22px;top:369px;width:52px;letter-spacing:-0.23px">187</div><div class="c ctr" style="left:75px;top:369px;width:55px;letter-spacing:-0.05px">WAHR</div><div class="c" style="left:131px;top:369px;width:78px;letter-spacing:0.15px">Mag.(FH)</div><div class="c" style="left:210px;top:369px;width:97px;letter-spacing:0.33px">Anna</div><div class="c" style="left:308px;top:369px;width:78px;letter-spacing:0.57px">Abermann</div><div class="c" style="left:387px;top:369px;width:31px;letter-spacing:0.07px">MSc</div><div class="c" style="left:419px;top:369px;width:83px;letter-spacing:-0.45px">FEMALE</div><div class="c" style="left:622px;top:369px;width:244px;letter-spacing:-0.07px">a192739b-bd46-4a06-85d1-2070a062622</div><div class="c" style="left:867px;top:369px;width:104px;letter-spacing:0.14px">Georg Bartas</div><div class="c" style="left:1124px;top:369px;width:78px;letter-spacing:0.42px">Open</div><div class="c" style="left:1203px;top:369px;width:143px">8.9.2023 10:54:00 AM</div><div class="c" style="left:1347px;top:369px;width:156px;letter-spacing:-0.06px">8.9.2023 3:54:00 PM</div><div class="c" style="left:1504px;top:369px;width:100px">5:0</div><div class="c" style="left:1605px;top:369px;width:82px;letter-spacing:-0.08px">5.00</div><div class="c" style="left:1688px;top:369px;width:58px;letter-spacing:0.55px">Patient</div><div class="c" style="left:1747px;top:369px;width:101px;letter-spacing:0.24px">Hausarzt</div><div class="c" style="left:1849px;top:369px;width:45px;letter-spacing:0.14px">Georg Bartas</div><div class="c r" style="left:22px;top:389px;width:52px;letter-spacing:-0.23px">187</div><div class="c ctr" style="left:75px;top:389px;width:55px;letter-spacing:-0.05px">WAHR</div><div class="c" style="left:131px;top:389px;width:78px;letter-spacing:0.15px">Mag.(FH)</div><div class="c" style="left:210px;top:389px;width:97px;letter-spacing:0.33px">Anna</div><div class="c" style="left:308px;top:389px;width:78px;letter-spacing:0.57px">Abermann</div><div class="c" style="left:387px;top:389px;width:31px;letter-spacing:0.07px">MSc</div><div class="c" style="left:419px;top:389px;width:83px;letter-spacing:-0.45px">FEMALE</div><div class="c" style="left:622px;top:389px;width:244px;letter-spacing:0.05px">bac101fc-5a53-4cef-93f8-eaa1edc11220</div><div class="c" style="left:867px;top:389px;width:151px;letter-spacing:-0.05px">Georg Bartas PFA</div><div class="c" style="left:1124px;top:389px;width:78px;letter-spacing:0.42px">Open</div><div class="c" style="left:1203px;top:389px;width:143px">14.8.2023 8:00:00 AM</div><div class="c" style="left:1347px;top:389px;width:156px">14.8.2023 9:00:00 AM</div><div class="c" style="left:1504px;top:389px;width:100px">1:0</div><div class="c" style="left:1605px;top:389px;width:82px;letter-spacing:-0.08px">1.00</div><div class="c" style="left:1688px;top:389px;width:58px;letter-spacing:0.55px">Patient</div><div class="c" style="left:1747px;top:389px;width:101px;letter-spacing:0.62px">Heimhelfer</div><div class="c r" style="left:22px;top:409px;width:52px;letter-spacing:-0.23px">187</div><div class="c ctr" style="left:75px;top:409px;width:55px;letter-spacing:-0.05px">WAHR</div><div class="c" style="left:131px;top:409px;width:78px;letter-spacing:0.15px">Mag.(FH)</div><div class="c" style="left:210px;top:409px;width:97px;letter-spacing:0.33px">Anna</div><div class="c" style="left:308px;top:409px;width:78px;letter-spacing:0.57px">Abermann</div><div class="c" style="left:387px;top:409px;width:31px;letter-spacing:0.07px">MSc</div><div class="c" style="left:419px;top:409px;width:83px;letter-spacing:-0.45px">FEMALE</div><div class="c" style="left:622px;top:409px;width:244px;letter-spacing:0.04px">114732b0-d7d8-49d6-bf34-4f44a7812e68</div><div class="c" style="left:867px;top:409px;width:104px;letter-spacing:0.14px">Georg Bartas</div><div class="c" style="left:1124px;top:409px;width:78px;letter-spacing:0.43px">Done</div><div class="c" style="left:1203px;top:409px;width:143px">23.1.2024 1:54:00 AM</div><div class="c" style="left:1347px;top:409px;width:156px">23.1.2024 2:54:00 AM</div><div class="c" style="left:1504px;top:409px;width:100px">1:0</div><div class="c" style="left:1605px;top:409px;width:82px;letter-spacing:-0.08px">1.00</div><div class="c" style="left:1688px;top:409px;width:58px;letter-spacing:0.55px">Patient</div><div class="c" style="left:1747px;top:409px;width:101px;letter-spacing:0.20px">Sonstige</div><div class="c" style="left:1849px;top:409px;width:45px;letter-spacing:0.14px">Georg Bartas</div><div class="c r" style="left:22px;top:429px;width:52px;letter-spacing:-0.23px">187</div><div class="c ctr" style="left:75px;top:429px;width:55px;letter-spacing:-0.05px">WAHR</div><div class="c" style="left:131px;top:429px;width:78px;letter-spacing:0.15px">Mag.(FH)</div><div class="c" style="left:210px;top:429px;width:97px;letter-spacing:0.33px">Anna</div><div class="c" style="left:308px;top:429px;width:78px;letter-spacing:0.57px">Abermann</div><div class="c" style="left:387px;top:429px;width:31px;letter-spacing:0.07px">MSc</div><div class="c" style="left:419px;top:429px;width:83px;letter-spacing:-0.45px">FEMALE</div><div class="c" style="left:622px;top:429px;width:244px;letter-spacing:-0.05px">60770b81-d782-482d-9466-2673d10c2c5e</div><div class="c" style="left:867px;top:429px;width:104px;letter-spacing:0.14px">Georg Bartas</div><div class="c" style="left:1124px;top:429px;width:78px;letter-spacing:0.43px">Done</div><div class="c" style="left:1203px;top:429px;width:143px">23.1.2024 6:00:00 AM</div><div class="c" style="left:1347px;top:429px;width:156px">23.1.2024 10:00:00 AM</div><div class="c" style="left:1504px;top:429px;width:100px">4:0</div><div class="c" style="left:1605px;top:429px;width:82px;letter-spacing:-0.08px">4.00</div><div class="c" style="left:1688px;top:429px;width:58px;letter-spacing:0.55px">Patient</div><div class="c" style="left:1747px;top:429px;width:101px;letter-spacing:0.55px">Diplomierte Gesundheit</div><div class="c" style="left:1849px;top:429px;width:45px;letter-spacing:0.14px">Georg Bartas</div><div class="c r" style="left:22px;top:449px;width:52px;letter-spacing:-0.23px">89</div><div class="c ctr" style="left:75px;top:449px;width:55px;letter-spacing:-0.05px">WAHR</div><div class="c" style="left:131px;top:449px;width:78px;letter-spacing:0.47px">Mag.</div><div class="c" style="left:210px;top:449px;width:97px;letter-spacing:0.73px">Hubert</div><div class="c" style="left:308px;top:449px;width:78px;letter-spacing:0.52px">Gruber</div><div class="c" style="left:387px;top:449px;width:31px;letter-spacing:0.07px">MSc</div><div class="c" style="left:419px;top:449px;width:83px;letter-spacing:-0.08px">MALE</div><div class="c r" style="left:503px;top:449px;width:79px;letter-spacing:-0.11px">06.05.1982</div><div class="c" style="left:583px;top:449px;width:38px;letter-spacing:-0.31px">AT</div><div class="c" style="left:622px;top:449px;width:244px">4a66c95b-e3d6-4d65-bb99-1cd230ae0a2</div><div class="c" style="left:867px;top:449px;width:104px;letter-spacing:0.17px">Jakob Wagner</div><div class="c" style="left:1124px;top:449px;width:78px;letter-spacing:0.42px">Open</div><div class="c" style="left:1203px;top:449px;width:143px">5.11.2022 8:00:00 AM</div><div class="c" style="left:1347px;top:449px;width:156px">5.11.2022 9:00:00 AM</div><div class="c" style="left:1504px;top:449px;width:100px">1:0</div><div class="c" style="left:1605px;top:449px;width:82px;letter-spacing:-0.08px">1.00</div><div class="c" style="left:1688px;top:449px;width:58px;letter-spacing:0.55px">Patient</div><div class="c" style="left:1747px;top:449px;width:101px;letter-spacing:0.54px">Physiotherapeut</div><div class="c r" style="left:22px;top:469px;width:52px;letter-spacing:-0.23px">89</div><div class="c ctr" style="left:75px;top:469px;width:55px;letter-spacing:-0.05px">WAHR</div><div class="c" style="left:131px;top:469px;width:78px;letter-spacing:0.47px">Mag.</div><div class="c" style="left:210px;top:469px;width:97px;letter-spacing:0.73px">Hubert</div><div class="c" style="left:308px;top:469px;width:78px;letter-spacing:0.52px">Gruber</div><div class="c" style="left:387px;top:469px;width:31px;letter-spacing:0.07px">MSc</div><div class="c" style="left:419px;top:469px;width:83px;letter-spacing:-0.08px">MALE</div><div class="c r" style="left:503px;top:469px;width:79px;letter-spacing:-0.11px">06.05.1982</div><div class="c" style="left:583px;top:469px;width:38px;letter-spacing:-0.31px">AT</div><div class="c" style="left:622px;top:469px;width:244px;letter-spacing:0.07px">0ff77427-bf4e-497a-ad47-51f11bc7c247</div><div class="c" style="left:867px;top:469px;width:104px;letter-spacing:0.14px">Georg Bartas</div><div class="c" style="left:1124px;top:469px;width:78px;letter-spacing:0.42px">Open</div><div class="c" style="left:1203px;top:469px;width:143px">22.8.2023 11:00:00 AM</div><div class="c" style="left:1347px;top:469px;width:156px;letter-spacing:-0.07px">22.8.2023 12:00:00 PM</div><div class="c" style="left:1504px;top:469px;width:100px">1:0</div><div class="c" style="left:1605px;top:469px;width:82px;letter-spacing:-0.08px">1.00</div><div class="c" style="left:1688px;top:469px;width:58px;letter-spacing:0.55px">Patient</div><div class="c" style="left:1747px;top:469px;width:101px;letter-spacing:0.21px">Pflegefachassistenz</div><div class="c" style="left:1849px;top:469px;width:45px;letter-spacing:0.12px">Beno Pr</div><div class="c r" style="left:22px;top:489px;width:52px;letter-spacing:-0.23px">89</div><div class="c ctr" style="left:75px;top:489px;width:55px;letter-spacing:-0.05px">WAHR</div><div class="c" style="left:131px;top:489px;width:78px;letter-spacing:0.47px">Mag.</div><div class="c" style="left:210px;top:489px;width:97px;letter-spacing:0.73px">Hubert</div><div class="c" style="left:308px;top:489px;width:78px;letter-spacing:0.52px">Gruber</div><div class="c" style="left:387px;top:489px;width:31px;letter-spacing:0.07px">MSc</div><div class="c" style="left:419px;top:489px;width:83px;letter-spacing:-0.08px">MALE</div><div class="c r" style="left:503px;top:489px;width:79px;letter-spacing:-0.11px">06.05.1982</div><div class="c" style="left:583px;top:489px;width:38px;letter-spacing:-0.31px">AT</div><div class="c" style="left:622px;top:489px;width:244px;letter-spacing:0.06px">d5621d74-81bc-40d2-9bd0-5977523fd03</div><div class="c" style="left:867px;top:489px;width:104px;letter-spacing:0.17px">Jakob Wagner</div><div class="c" style="left:1124px;top:489px;width:78px;letter-spacing:0.42px">Open</div><div class="c" style="left:1203px;top:489px;width:143px;letter-spacing:-0.07px">15.11.2022 2:00:00 PM</div><div class="c" style="left:1347px;top:489px;width:156px;letter-spacing:-0.07px">15.11.2022 2:30:00 PM</div><div class="c" style="left:1504px;top:489px;width:100px;letter-spacing:-0.08px">0:30</div><div class="c" style="left:1605px;top:489px;width:82px;letter-spacing:-0.08px">0.50</div><div class="c" style="left:1688px;top:489px;width:58px;letter-spacing:0.55px">Patient</div><div class="c" style="left:1747px;top:489px;width:101px;letter-spacing:0.55px">Diplomierte Gesundheit</div><div class="c" style="left:1849px;top:489px;width:45px;letter-spacing:0.38px">Augenarzt</div><div class="c r" style="left:22px;top:509px;width:52px;letter-spacing:-0.23px">25</div><div class="c ctr" style="left:75px;top:509px;width:55px;letter-spacing:-0.05px">WAHR</div><div class="c" style="left:131px;top:509px;width:78px;letter-spacing:0.47px">Mag.</div><div class="c" style="left:210px;top:509px;width:97px;letter-spacing:0.51px">Christof</div><div class="c" style="left:308px;top:509px;width:78px;letter-spacing:0.41px">Heide</div><div class="c" style="left:387px;top:509px;width:31px;letter-spacing:0.15px">MSc.</div><div class="c" style="left:419px;top:509px;width:83px;letter-spacing:-0.08px">MALE</div><div class="c r" style="left:503px;top:509px;width:79px;letter-spacing:-0.11px">22.06.1980</div><div class="c" style="left:583px;top:509px;width:38px;letter-spacing:-0.22px">BA</div><div class="c" style="left:622px;top:509px;width:244px;letter-spacing:0.11px">e3da4f30-4250-4c2d-89ff-73eb369f9d59</div><div class="c" style="left:867px;top:509px;width:104px;letter-spacing:0.34px">Benjamin Pöll</div><div class="c" style="left:1124px;top:509px;width:78px;letter-spacing:0.42px">Open</div><div class="c" style="left:1203px;top:509px;width:143px;letter-spacing:-0.07px">8.11.2022 1:00:00 PM</div><div class="c" style="left:1347px;top:509px;width:156px;letter-spacing:-0.07px">8.11.2022 3:00:00 PM</div><div class="c" style="left:1504px;top:509px;width:100px">2:0</div><div class="c" style="left:1605px;top:509px;width:82px;letter-spacing:-0.08px">2.00</div><div class="c" style="left:1688px;top:509px;width:58px;letter-spacing:0.55px">Patient</div><div class="c" style="left:1747px;top:509px;width:101px;letter-spacing:0.62px">Heimhelfer</div><div class="c" style="left:1849px;top:509px;width:45px;letter-spacing:0.46px">Benjamin</div><div class="c r" style="left:22px;top:529px;width:52px;letter-spacing:-0.23px">25</div><div class="c ctr" style="left:75px;top:529px;width:55px;letter-spacing:-0.05px">WAHR</div><div class="c" style="left:131px;top:529px;width:78px;letter-spacing:0.47px">Mag.</div><div class="c" style="left:210px;top:529px;width:97px;letter-spacing:0.51px">Christof</div><div class="c" style="left:308px;top:529px;width:78px;letter-spacing:0.41px">Heide</div><div class="c" style="left:387px;top:529px;width:31px;letter-spacing:0.15px">MSc.</div><div class="c" style="left:419px;top:529px;width:83px;letter-spacing:-0.08px">MALE</div><div class="c r" style="left:503px;top:529px;width:79px;letter-spacing:-0.11px">22.06.1980</div><div class="c" style="left:583px;top:529px;width:38px;letter-spacing:-0.22px">BA</div><div class="c" style="left:622px;top:529px;width:244px;letter-spacing:0.13px">fbaebffe-6c29-40b2-b0e3-7a94fc57344a</div><div class="c" style="left:867px;top:529px;width:104px;letter-spacing:0.17px">Jakob Wagner</div><div class="c" style="left:1124px;top:529px;width:78px;letter-spacing:0.42px">Open</div><div class="c" style="left:1203px;top:529px;width:143px;letter-spacing:-0.07px">10.11.2023 5:40:00 PM</div><div class="c" style="left:1347px;top:529px;width:156px;letter-spacing:-0.07px">10.11.2023 7:40:00 PM</div><div class="c" style="left:1504px;top:529px;width:100px">2:0</div><div class="c" style="left:1605px;top:529px;width:82px;letter-spacing:-0.08px">2.00</div><div class="c" style="left:1688px;top:529px;width:58px;letter-spacing:0.55px">Patient</div><div class="c" style="left:1747px;top:529px;width:101px;letter-spacing:0.20px">Sonstige</div><div class="c" style="left:1849px;top:529px;width:45px;letter-spacing:0.17px">Jakob Wagner</div><div class="c r" style="left:22px;top:549px;width:52px;letter-spacing:-0.23px">25</div><div class="c ctr" style="left:75px;top:549px;width:55px;letter-spacing:-0.05px">WAHR</div><div class="c" style="left:131px;top:549px;width:78px;letter-spacing:0.47px">Mag.</div><div class="c" style="left:210px;top:549px;width:97px;letter-spacing:0.51px">Christof</div><div class="c" style="left:308px;top:549px;width:78px;letter-spacing:0.41px">Heide</div><div class="c" style="left:387px;top:549px;width:31px;letter-spacing:0.15px">MSc.</div><div class="c" style="left:419px;top:549px;width:83px;letter-spacing:-0.08px">MALE</div><div class="c r" style="left:503px;top:549px;width:79px;letter-spacing:-0.11px">22.06.1980</div><div class="c" style="left:583px;top:549px;width:38px;letter-spacing:-0.22px">BA</div><div class="c" style="left:622px;top:549px;width:244px;letter-spacing:0.13px">fbaebffe-6c29-40b2-b0e3-7a94fc57344a</div><div class="c" style="left:867px;top:549px;width:104px;letter-spacing:0.17px">Jakob Wagner</div><div class="c" style="left:1124px;top:549px;width:78px;letter-spacing:0.42px">Open</div><div class="c" style="left:1203px;top:549px;width:143px;letter-spacing:-0.07px">10.11.2023 5:40:00 PM</div><div class="c" style="left:1347px;top:549px;width:156px;letter-spacing:-0.07px">10.11.2023 7:40:00 PM</div><div class="c" style="left:1504px;top:549px;width:100px">2:0</div><div class="c" style="left:1605px;top:549px;width:82px;letter-spacing:-0.08px">2.00</div><div class="c" style="left:1688px;top:549px;width:58px;letter-spacing:0.55px">Patient</div><div class="c" style="left:1747px;top:549px;width:101px;letter-spacing:0.20px">Sonstige</div><div class="c" style="left:1849px;top:549px;width:45px;letter-spacing:0.17px">Jakob Wagner</div><div class="c r" style="left:22px;top:569px;width:52px;letter-spacing:-0.23px">189</div><div class="c ctr" style="left:75px;top:569px;width:55px;letter-spacing:-0.05px">WAHR</div><div class="c" style="left:210px;top:569px;width:97px;letter-spacing:0.33px">Anna</div><div class="c" style="left:308px;top:569px;width:78px;letter-spacing:0.20px">ANNAN</div><div class="c" style="left:419px;top:569px;width:83px;letter-spacing:-0.08px">MALE</div><div class="c" style="left:622px;top:569px;width:244px;letter-spacing:-0.05px">a90eeca0-f854-4105-a2f6-5779754d1039</div><div class="c" style="left:867px;top:569px;width:104px;letter-spacing:0.14px">Georg Bartas</div><div class="c" style="left:1019px;top:569px;width:104px;letter-spacing:0.55px">Aktivitäten nach</div><div class="c" style="left:1124px;top:569px;width:78px;letter-spacing:0.42px">Open</div><div class="c" style="left:1203px;top:569px;width:143px;letter-spacing:-0.07px">11.8.2023 8:21:00 PM</div><div class="c" style="left:1347px;top:569px;width:156px;letter-spacing:-0.07px">11.8.2023 9:21:00 PM</div><div class="c" style="left:1504px;top:569px;width:100px">1:0</div><div class="c" style="left:1605px;top:569px;width:82px;letter-spacing:-0.08px">1.00</div><div class="c" style="left:1688px;top:569px;width:58px;letter-spacing:0.55px">Patient</div><div class="c" style="left:1747px;top:569px;width:101px;letter-spacing:0.55px">Diplomierte Gesundheit</div><div class="c r" style="left:22px;top:589px;width:52px;letter-spacing:-0.23px">189</div><div class="c ctr" style="left:75px;top:589px;width:55px;letter-spacing:-0.05px">WAHR</div><div class="c" style="left:210px;top:589px;width:97px;letter-spacing:0.33px">Anna</div><div class="c" style="left:308px;top:589px;width:78px;letter-spacing:0.20px">ANNAN</div><div class="c" style="left:419px;top:589px;width:83px;letter-spacing:-0.08px">MALE</div><div class="c" style="left:622px;top:589px;width:244px">a3ab0ac1-2d9c-497d-91f6-5c6e695360df</div><div class="c" style="left:867px;top:589px;width:104px;letter-spacing:0.14px">Georg Bartas</div><div class="c" style="left:1124px;top:589px;width:78px;letter-spacing:0.42px">Open</div><div class="c" style="left:1203px;top:589px;width:143px">21.8.2023 8:44:00 AM</div><div class="c" style="left:1347px;top:589px;width:156px">21.8.2023 9:44:00 AM</div><div class="c" style="left:1504px;top:589px;width:100px">1:0</div><div class="c" style="left:1605px;top:589px;width:82px;letter-spacing:-0.08px">1.00</div><div class="c" style="left:1688px;top:589px;width:58px;letter-spacing:0.55px">Patient</div><div class="c" style="left:1747px;top:589px;width:101px;letter-spacing:0.55px">Diplomierte Gesundheit</div><div class="c r" style="left:22px;top:609px;width:52px;letter-spacing:-0.23px">91</div><div class="c ctr" style="left:75px;top:609px;width:55px;letter-spacing:-0.05px">WAHR</div><div class="c" style="left:210px;top:609px;width:97px;letter-spacing:0.58px">Markus</div><div class="c" style="left:308px;top:609px;width:78px;letter-spacing:0.45px">Prüglller</div><div class="c" style="left:419px;top:609px;width:83px;letter-spacing:-0.08px">MALE</div><div class="c r" style="left:503px;top:609px;width:79px;letter-spacing:-0.11px">08.05.2022</div><div class="c" style="left:622px;top:609px;width:244px;letter-spacing:0.11px">516bb8c5-393f-4a2d-8681-6abbf9e1afb2</div><div class="c" style="left:867px;top:609px;width:104px;letter-spacing:0.14px">Georg Bartas</div><div class="c" style="left:1124px;top:609px;width:78px;letter-spacing:0.42px">Open</div><div class="c" style="left:1203px;top:609px;width:143px;letter-spacing:-0.07px">22.8.2023 12:00:00 PM</div><div class="c" style="left:1347px;top:609px;width:156px;letter-spacing:-0.07px">22.8.2023 1:00:00 PM</div><div class="c" style="left:1504px;top:609px;width:100px">1:0</div><div class="c" style="left:1605px;top:609px;width:82px;letter-spacing:-0.08px">1.00</div><div class="c" style="left:1688px;top:609px;width:58px;letter-spacing:0.55px">Patient</div><div class="c" style="left:1747px;top:609px;width:101px;letter-spacing:0.21px">Pflegefachassistenz</div><div class="c" style="left:1849px;top:609px;width:45px;letter-spacing:0.12px">Beno Pr</div><div class="c r" style="left:22px;top:629px;width:52px;letter-spacing:-0.23px">93</div><div class="c ctr" style="left:75px;top:629px;width:55px;letter-spacing:-0.05px">WAHR</div><div class="c" style="left:131px;top:629px;width:78px;letter-spacing:0.42px">Dr.</div><div class="c" style="left:210px;top:629px;width:97px;letter-spacing:0.34px">Reinhard</div><div class="c" style="left:308px;top:629px;width:78px;letter-spacing:0.52px">Gruber</div><div class="c" style="left:419px;top:629px;width:83px;letter-spacing:-0.08px">MALE</div><div class="c r" style="left:503px;top:629px;width:79px;letter-spacing:-0.11px">15.05.1958</div><div class="c" style="left:622px;top:629px;width:244px">d83b3123-a919-46fe-b976-4a4417eb6ad</div><div class="c" style="left:867px;top:629px;width:104px;letter-spacing:0.14px">Georg Bartas</div><div class="c" style="left:1124px;top:629px;width:78px;letter-spacing:0.42px">Open</div><div class="c" style="left:1203px;top:629px;width:143px">22.8.2023 9:00:00 AM</div><div class="c" style="left:1347px;top:629px;width:156px">22.8.2023 11:30:00 AM</div><div class="c" style="left:1504px;top:629px;width:100px;letter-spacing:-0.08px">2:30</div><div class="c" style="left:1605px;top:629px;width:82px;letter-spacing:-0.08px">2.50</div><div class="c" style="left:1688px;top:629px;width:58px;letter-spacing:0.55px">Patient</div><div class="c" style="left:1747px;top:629px;width:101px;letter-spacing:0.21px">Pflegefachassistenz</div><div class="c" style="left:1849px;top:629px;width:45px;letter-spacing:0.12px">Beno Pr</div><div class="c r" style="left:22px;top:649px;width:52px;letter-spacing:-0.23px">93</div><div class="c ctr" style="left:75px;top:649px;width:55px;letter-spacing:-0.05px">WAHR</div><div class="c" style="left:131px;top:649px;width:78px;letter-spacing:0.42px">Dr.</div><div class="c" style="left:210px;top:649px;width:97px;letter-spacing:0.34px">Reinhard</div><div class="c" style="left:308px;top:649px;width:78px;letter-spacing:0.52px">Gruber</div><div class="c" style="left:419px;top:649px;width:83px;letter-spacing:-0.08px">MALE</div><div class="c r" style="left:503px;top:649px;width:79px;letter-spacing:-0.11px">15.05.1958</div><div class="c" style="left:622px;top:649px;width:244px">d83b3123-a919-46fe-b976-4a4417eb6ad</div><div class="c" style="left:867px;top:649px;width:104px;letter-spacing:0.14px">Georg Bartas</div><div class="c" style="left:1124px;top:649px;width:78px;letter-spacing:0.42px">Open</div><div class="c" style="left:1203px;top:649px;width:143px">22.8.2023 9:00:00 AM</div><div class="c" style="left:1347px;top:649px;width:156px">22.8.2023 11:30:00 AM</div><div class="c" style="left:1504px;top:649px;width:100px;letter-spacing:-0.08px">2:30</div><div class="c" style="left:1605px;top:649px;width:82px;letter-spacing:-0.08px">2.50</div><div class="c" style="left:1688px;top:649px;width:58px;letter-spacing:0.55px">Patient</div><div class="c" style="left:1747px;top:649px;width:101px;letter-spacing:0.21px">Pflegefachassistenz</div><div class="c" style="left:1849px;top:649px;width:45px;letter-spacing:0.12px">Beno Pr</div><div class="c r" style="left:22px;top:669px;width:52px;letter-spacing:-0.23px">93</div><div class="c ctr" style="left:75px;top:669px;width:55px;letter-spacing:-0.05px">WAHR</div><div class="c" style="left:131px;top:669px;width:78px;letter-spacing:0.42px">Dr.</div><div class="c" style="left:210px;top:669px;width:97px;letter-spacing:0.34px">Reinhard</div><div class="c" style="left:308px;top:669px;width:78px;letter-spacing:0.52px">Gruber</div><div class="c" style="left:419px;top:669px;width:83px;letter-spacing:-0.08px">MALE</div><div class="c r" style="left:503px;top:669px;width:79px;letter-spacing:-0.11px">15.05.1958</div><div class="c" style="left:622px;top:669px;width:244px">d83b3123-a919-46fe-b976-4a4417eb6ad</div><div class="c" style="left:867px;top:669px;width:104px;letter-spacing:0.14px">Georg Bartas</div><div class="c" style="left:1124px;top:669px;width:78px;letter-spacing:0.42px">Open</div><div class="c" style="left:1203px;top:669px;width:143px">22.8.2023 9:00:00 AM</div><div class="c" style="left:1347px;top:669px;width:156px">22.8.2023 11:30:00 AM</div><div class="c" style="left:1504px;top:669px;width:100px;letter-spacing:-0.08px">2:30</div><div class="c" style="left:1605px;top:669px;width:82px;letter-spacing:-0.08px">2.50</div><div class="c" style="left:1688px;top:669px;width:58px;letter-spacing:0.55px">Patient</div><div class="c" style="left:1747px;top:669px;width:101px;letter-spacing:0.21px">Pflegefachassistenz</div><div class="c" style="left:1849px;top:669px;width:45px;letter-spacing:0.12px">Beno Pr</div><div class="c r" style="left:22px;top:689px;width:52px;letter-spacing:-0.23px">185</div><div class="c ctr" style="left:75px;top:689px;width:55px;letter-spacing:-0.05px">WAHR</div><div class="c" style="left:131px;top:689px;width:78px;letter-spacing:0.47px">Mag.</div><div class="c" style="left:210px;top:689px;width:97px;letter-spacing:0.60px">Bettina</div><div class="c" style="left:308px;top:689px;width:78px;letter-spacing:0.33px">Anna</div><div class="c" style="left:419px;top:689px;width:83px;letter-spacing:-0.45px">FEMALE</div><div class="c r" style="left:503px;top:689px;width:79px;letter-spacing:-0.11px">15.03.1978</div><div class="c" style="left:622px;top:689px;width:244px;letter-spacing:-0.11px">c771e726-96c6-42a9-95a4-523f4a543c0c</div><div class="c" style="left:867px;top:689px;width:104px;letter-spacing:0.14px">Georg Bartas</div><div class="c" style="left:1124px;top:689px;width:78px;letter-spacing:0.42px">Open</div><div class="c" style="left:1203px;top:689px;width:143px;letter-spacing:-0.07px">27.10.2023 2:41:00 PM</div><div class="c" style="left:1347px;top:689px;width:156px;letter-spacing:-0.07px">27.10.2023 3:41:00 PM</div><div class="c" style="left:1504px;top:689px;width:100px">1:0</div><div class="c" style="left:1605px;top:689px;width:82px;letter-spacing:-0.08px">1.00</div><div class="c" style="left:1688px;top:689px;width:58px;letter-spacing:0.55px">Patient</div><div class="c" style="left:1747px;top:689px;width:101px;letter-spacing:0.54px">Physiotherapeut</div><div class="c" style="left:1849px;top:689px;width:45px;letter-spacing:0.14px">Georg Bartas</div><div class="c r" style="left:22px;top:709px;width:52px;letter-spacing:-0.23px">185</div><div class="c ctr" style="left:75px;top:709px;width:55px;letter-spacing:-0.05px">WAHR</div><div class="c" style="left:131px;top:709px;width:78px;letter-spacing:0.47px">Mag.</div><div class="c" style="left:210px;top:709px;width:97px;letter-spacing:0.60px">Bettina</div><div class="c" style="left:308px;top:709px;width:78px;letter-spacing:0.33px">Anna</div><div class="c" style="left:419px;top:709px;width:83px;letter-spacing:-0.45px">FEMALE</div><div class="c r" style="left:503px;top:709px;width:79px;letter-spacing:-0.11px">15.03.1978</div><div class="c" style="left:622px;top:709px;width:244px">4d36b95f-9404-43c3-9075-d497b30a4266</div><div class="c" style="left:867px;top:709px;width:104px;letter-spacing:0.14px">Georg Bartas</div><div class="c" style="left:1019px;top:709px;width:104px;letter-spacing:0.12px">Sonstiges</div><div class="c" style="left:1124px;top:709px;width:78px;letter-spacing:0.42px">Open</div><div class="c" style="left:1203px;top:709px;width:143px;letter-spacing:-0.07px">29.10.2023 2:37:00 PM</div><div class="c" style="left:1347px;top:709px;width:156px;letter-spacing:-0.07px">29.10.2023 3:37:00 PM</div><div class="c" style="left:1504px;top:709px;width:100px">1:0</div><div class="c" style="left:1605px;top:709px;width:82px;letter-spacing:-0.08px">1.00</div><div class="c" style="left:1688px;top:709px;width:58px;letter-spacing:0.55px">Patient</div><div class="c" style="left:1747px;top:709px;width:101px;letter-spacing:0.54px">Physiotherapeut</div><div class="c r" style="left:22px;top:729px;width:52px;letter-spacing:-0.23px">185</div><div class="c ctr" style="left:75px;top:729px;width:55px;letter-spacing:-0.05px">WAHR</div><div class="c" style="left:131px;top:729px;width:78px;letter-spacing:0.47px">Mag.</div><div class="c" style="left:210px;top:729px;width:97px;letter-spacing:0.60px">Bettina</div><div class="c" style="left:308px;top:729px;width:78px;letter-spacing:0.33px">Anna</div><div class="c" style="left:419px;top:729px;width:83px;letter-spacing:-0.45px">FEMALE</div><div class="c r" style="left:503px;top:729px;width:79px;letter-spacing:-0.11px">15.03.1978</div><div class="c" style="left:622px;top:729px;width:244px">0270a288-ac48-416c-9eb2-20f7e1f7c5ce</div><div class="c" style="left:867px;top:729px;width:104px;letter-spacing:0.14px">Georg Bartas</div><div class="c" style="left:1124px;top:729px;width:78px;letter-spacing:0.42px">Open</div><div class="c" style="left:1203px;top:729px;width:143px">1.0.1970 8:00:00 AM</div><div class="c" style="left:1347px;top:729px;width:156px">1.0.1970 10:00:00 AM</div><div class="c" style="left:1504px;top:729px;width:100px">2:0</div><div class="c" style="left:1605px;top:729px;width:82px;letter-spacing:-0.08px">2.00</div><div class="c" style="left:1688px;top:729px;width:58px;letter-spacing:0.55px">Patient</div><div class="c" style="left:1747px;top:729px;width:101px;letter-spacing:0.20px">Sonstige</div><div class="c" style="left:1849px;top:729px;width:45px;letter-spacing:0.14px">Georg Bartas</div><div class="c r" style="left:22px;top:749px;width:52px;letter-spacing:-0.23px">185</div><div class="c ctr" style="left:75px;top:749px;width:55px;letter-spacing:-0.05px">WAHR</div><div class="c" style="left:131px;top:749px;width:78px;letter-spacing:0.47px">Mag.</div><div class="c" style="left:210px;top:749px;width:97px;letter-spacing:0.60px">Bettina</div><div class="c" style="left:308px;top:749px;width:78px;letter-spacing:0.33px">Anna</div><div class="c" style="left:419px;top:749px;width:83px;letter-spacing:-0.45px">FEMALE</div><div class="c r" style="left:503px;top:749px;width:79px;letter-spacing:-0.11px">15.03.1978</div><div class="c" style="left:622px;top:749px;width:244px">9f73c656-e631-48bb-a407-0e7016f09f85</div><div class="c" style="left:867px;top:749px;width:151px;letter-spacing:-0.05px">Georg Bartas PFA</div><div class="c" style="left:1124px;top:749px;width:78px;letter-spacing:0.42px">Open</div><div class="c" style="left:1203px;top:749px;width:143px;letter-spacing:-0.07px">3.11.2023 5:25:00 PM</div><div class="c" style="left:1347px;top:749px;width:156px;letter-spacing:-0.07px">3.11.2023 10:25:00 PM</div><div class="c" style="left:1504px;top:749px;width:100px">5:0</div><div class="c" style="left:1605px;top:749px;width:82px;letter-spacing:-0.08px">5.00</div><div class="c" style="left:1688px;top:749px;width:58px;letter-spacing:0.55px">Patient</div><div class="c" style="left:1747px;top:749px;width:101px;letter-spacing:0.20px">Sonstige</div><div class="c" style="left:1849px;top:749px;width:45px;letter-spacing:0.14px">Georg Bartas</div><div class="c r" style="left:22px;top:769px;width:52px;letter-spacing:-0.23px">185</div><div class="c ctr" style="left:75px;top:769px;width:55px;letter-spacing:-0.05px">WAHR</div><div class="c" style="left:131px;top:769px;width:78px;letter-spacing:0.47px">Mag.</div><div class="c" style="left:210px;top:769px;width:97px;letter-spacing:0.60px">Bettina</div><div class="c" style="left:308px;top:769px;width:78px;letter-spacing:0.33px">Anna</div><div class="c" style="left:419px;top:769px;width:83px;letter-spacing:-0.45px">FEMALE</div><div class="c r" style="left:503px;top:769px;width:79px;letter-spacing:-0.11px">15.03.1978</div><div class="c" style="left:622px;top:769px;width:244px">433fcdab-837c-4acf-a2a5-71eb265501a5</div><div class="c" style="left:867px;top:769px;width:151px;letter-spacing:-0.05px">Georg Bartas PFA</div><div class="c" style="left:1124px;top:769px;width:78px;letter-spacing:0.42px">Open</div><div class="c" style="left:1203px;top:769px;width:143px">4.11.2023 6:03:00 AM</div><div class="c" style="left:1347px;top:769px;width:156px">4.11.2023 8:03:00 AM</div><div class="c" style="left:1504px;top:769px;width:100px">2:0</div><div class="c" style="left:1605px;top:769px;width:82px;letter-spacing:-0.08px">2.00</div><div class="c" style="left:1688px;top:769px;width:58px;letter-spacing:0.55px">Patient</div><div class="c" style="left:1747px;top:769px;width:101px;letter-spacing:0.20px">Sonstige</div><div class="c" style="left:1849px;top:769px;width:45px;letter-spacing:0.14px">Georg Bartas</div><div class="c r" style="left:22px;top:789px;width:52px;letter-spacing:-0.23px">185</div><div class="c ctr" style="left:75px;top:789px;width:55px;letter-spacing:-0.05px">WAHR</div><div class="c" style="left:131px;top:789px;width:78px;letter-spacing:0.47px">Mag.</div><div class="c" style="left:210px;top:789px;width:97px;letter-spacing:0.60px">Bettina</div><div class="c" style="left:308px;top:789px;width:78px;letter-spacing:0.33px">Anna</div><div class="c" style="left:419px;top:789px;width:83px;letter-spacing:-0.45px">FEMALE</div><div class="c r" style="left:503px;top:789px;width:79px;letter-spacing:-0.11px">15.03.1978</div><div class="c" style="left:622px;top:789px;width:244px;letter-spacing:0.17px">fff77f00-c006-4f1a-bf2c-6a4f7b5e354e</div><div class="c" style="left:867px;top:789px;width:151px;letter-spacing:-0.05px">Georg Bartas PFA</div><div class="c" style="left:1124px;top:789px;width:78px;letter-spacing:0.43px">Done</div><div class="c" style="left:1203px;top:789px;width:143px">5.11.2023 6:05:00 AM</div><div class="c" style="left:1347px;top:789px;width:156px">5.11.2023 7:05:00 AM</div><div class="c" style="left:1504px;top:789px;width:100px">1:0</div><div class="c" style="left:1605px;top:789px;width:82px;letter-spacing:-0.08px">1.00</div><div class="c" style="left:1688px;top:789px;width:58px;letter-spacing:0.55px">Patient</div><div class="c" style="left:1747px;top:789px;width:101px;letter-spacing:0.54px">Physiotherapeut</div><div class="c" style="left:1849px;top:789px;width:45px;letter-spacing:0.14px">Georg Bartas</div><div class="c r" style="left:22px;top:809px;width:52px;letter-spacing:-0.23px">185</div><div class="c ctr" style="left:75px;top:809px;width:55px;letter-spacing:-0.05px">WAHR</div><div class="c" style="left:131px;top:809px;width:78px;letter-spacing:0.47px">Mag.</div><div class="c" style="left:210px;top:809px;width:97px;letter-spacing:0.60px">Bettina</div><div class="c" style="left:308px;top:809px;width:78px;letter-spacing:0.33px">Anna</div><div class="c" style="left:419px;top:809px;width:83px;letter-spacing:-0.45px">FEMALE</div><div class="c r" style="left:503px;top:809px;width:79px;letter-spacing:-0.11px">15.03.1978</div><div class="c" style="left:622px;top:809px;width:244px">8f388c76-6991-4c46-a487-7bdc166f4bc1</div><div class="c" style="left:867px;top:809px;width:104px;letter-spacing:0.14px">Georg Bartas</div><div class="c" style="left:1124px;top:809px;width:78px;letter-spacing:0.43px">Done</div><div class="c" style="left:1203px;top:809px;width:143px">16.11.2023 9:42:00 AM</div><div class="c" style="left:1347px;top:809px;width:156px;letter-spacing:-0.04px">16.11.2023 10:42:00 AM</div><div class="c" style="left:1504px;top:809px;width:100px">1:0</div><div class="c" style="left:1605px;top:809px;width:82px;letter-spacing:-0.08px">1.00</div><div class="c" style="left:1688px;top:809px;width:58px;letter-spacing:0.55px">Patient</div><div class="c" style="left:1747px;top:809px;width:101px;letter-spacing:0.20px">Sonstige</div><div class="c" style="left:1849px;top:809px;width:45px;letter-spacing:0.14px">Georg Bartas</div><div class="c r" style="left:22px;top:829px;width:52px;letter-spacing:-0.23px">185</div><div class="c ctr" style="left:75px;top:829px;width:55px;letter-spacing:-0.05px">WAHR</div><div class="c" style="left:131px;top:829px;width:78px;letter-spacing:0.47px">Mag.</div><div class="c" style="left:210px;top:829px;width:97px;letter-spacing:0.60px">Bettina</div><div class="c" style="left:308px;top:829px;width:78px;letter-spacing:0.33px">Anna</div><div class="c" style="left:419px;top:829px;width:83px;letter-spacing:-0.45px">FEMALE</div><div class="c r" style="left:503px;top:829px;width:79px;letter-spacing:-0.11px">15.03.1978</div><div class="c" style="left:622px;top:829px;width:244px">8f388c76-6991-4c46-a487-7bdc166f4bc1</div><div class="c" style="left:867px;top:829px;width:104px;letter-spacing:0.14px">Georg Bartas</div><div class="c" style="left:1124px;top:829px;width:78px;letter-spacing:0.43px">Done</div><div class="c" style="left:1203px;top:829px;width:143px">16.11.2023 9:42:00 AM</div><div class="c" style="left:1347px;top:829px;width:156px;letter-spacing:-0.04px">16.11.2023 10:42:00 AM</div><div class="c" style="left:1504px;top:829px;width:100px">1:0</div><div class="c" style="left:1605px;top:829px;width:82px;letter-spacing:-0.08px">1.00</div><div class="c" style="left:1688px;top:829px;width:58px;letter-spacing:0.55px">Patient</div><div class="c" style="left:1747px;top:829px;width:101px;letter-spacing:0.20px">Sonstige</div><div class="c" style="left:1849px;top:829px;width:45px;letter-spacing:0.14px">Georg Bartas</div><div class="c r" style="left:22px;top:849px;width:52px;letter-spacing:-0.23px">184</div><div class="c ctr" style="left:75px;top:849px;width:55px;letter-spacing:-0.05px">WAHR</div><div class="c" style="left:210px;top:849px;width:97px;letter-spacing:0.63px">Marianne</div><div class="c" style="left:308px;top:849px;width:78px;letter-spacing:0.33px">Anna</div><div class="c" style="left:419px;top:849px;width:83px;letter-spacing:-0.45px">FEMALE</div><div class="c r" style="left:503px;top:849px;width:79px;letter-spacing:-0.11px">18.08.2023</div><div class="c" style="left:622px;top:849px;width:244px;letter-spacing:-0.10px">6c643957-48cc-4ba7-ac74-ee9034555891</div><div class="c" style="left:867px;top:849px;width:104px;letter-spacing:0.14px">Georg Bartas</div><div class="c" style="left:1124px;top:849px;width:78px;letter-spacing:0.42px">Open</div><div class="c" style="left:1203px;top:849px;width:143px;letter-spacing:-0.07px">27.10.2023 2:45:00 PM</div><div class="c" style="left:1347px;top:849px;width:156px;letter-spacing:-0.07px">27.10.2023 4:45:00 PM</div><div class="c" style="left:1504px;top:849px;width:100px">2:0</div><div class="c" style="left:1605px;top:849px;width:82px;letter-spacing:-0.08px">2.00</div><div class="c" style="left:1688px;top:849px;width:58px;letter-spacing:0.55px">Patient</div><div class="c" style="left:1747px;top:849px;width:101px;letter-spacing:0.62px">Heimhelfer</div><div class="c" style="left:1849px;top:849px;width:45px;letter-spacing:0.14px">Georg Bartas</div><div class="c r" style="left:22px;top:869px;width:52px;letter-spacing:-0.23px">184</div><div class="c ctr" style="left:75px;top:869px;width:55px;letter-spacing:-0.05px">WAHR</div><div class="c" style="left:210px;top:869px;width:97px;letter-spacing:0.63px">Marianne</div><div class="c" style="left:308px;top:869px;width:78px;letter-spacing:0.33px">Anna</div><div class="c" style="left:419px;top:869px;width:83px;letter-spacing:-0.45px">FEMALE</div><div class="c r" style="left:503px;top:869px;width:79px;letter-spacing:-0.11px">18.08.2023</div><div class="c" style="left:622px;top:869px;width:244px;letter-spacing:0.09px">62f5093d-c75c-47dd-b604-cfc11d60aead</div><div class="c" style="left:867px;top:869px;width:151px;letter-spacing:-0.05px">Georg Bartas PFA</div><div class="c" style="left:1124px;top:869px;width:78px;letter-spacing:0.42px">Open</div><div class="c" style="left:1203px;top:869px;width:143px;letter-spacing:-0.06px">1.0.1970 2:50:00 PM</div><div class="c" style="left:1347px;top:869px;width:156px">1.0.1970 11:00:00 AM</div><div class="c" style="left:1504px;top:869px;width:100px;letter-spacing:-0.08px">3:49</div><div class="c" style="left:1605px;top:869px;width:82px;letter-spacing:-0.08px">3.83</div><div class="c" style="left:1688px;top:869px;width:58px;letter-spacing:0.55px">Patient</div><div class="c" style="left:1747px;top:869px;width:101px;letter-spacing:0.20px">Sonstige</div><div class="c" style="left:1849px;top:869px;width:45px;letter-spacing:0.14px">Georg Bartas</div><div class="c r" style="left:22px;top:889px;width:52px;letter-spacing:-0.23px">184</div><div class="c ctr" style="left:75px;top:889px;width:55px;letter-spacing:-0.05px">WAHR</div><div class="c" style="left:210px;top:889px;width:97px;letter-spacing:0.63px">Marianne</div><div class="c" style="left:308px;top:889px;width:78px;letter-spacing:0.33px">Anna</div><div class="c" style="left:419px;top:889px;width:83px;letter-spacing:-0.45px">FEMALE</div><div class="c r" style="left:503px;top:889px;width:79px;letter-spacing:-0.11px">18.08.2023</div><div class="c" style="left:622px;top:889px;width:244px">eac16a71-a77c-4a0a-8ce0-3bbb71ba8880</div><div class="c" style="left:867px;top:889px;width:104px;letter-spacing:0.14px">Georg Bartas</div><div class="c" style="left:1124px;top:889px;width:78px;letter-spacing:0.42px">Open</div><div class="c" style="left:1203px;top:889px;width:143px;letter-spacing:-0.07px">21.11.2023 5:01:00 PM</div><div class="c" style="left:1347px;top:889px;width:156px;letter-spacing:-0.07px">21.11.2023 7:01:00 PM</div><div class="c" style="left:1504px;top:889px;width:100px">2:0</div><div class="c" style="left:1605px;top:889px;width:82px;letter-spacing:-0.08px">2.00</div><div class="c" style="left:1688px;top:889px;width:58px;letter-spacing:0.55px">Patient</div><div class="c" style="left:1747px;top:889px;width:101px;letter-spacing:0.21px">Pflegefachassistenz</div><div class="c" style="left:1849px;top:889px;width:45px;letter-spacing:0.46px">Benjamin</div><div class="c r" style="left:22px;top:909px;width:52px;letter-spacing:-0.23px">184</div><div class="c ctr" style="left:75px;top:909px;width:55px;letter-spacing:-0.05px">WAHR</div><div class="c" style="left:210px;top:909px;width:97px;letter-spacing:0.63px">Marianne</div><div class="c" style="left:308px;top:909px;width:78px;letter-spacing:0.33px">Anna</div><div class="c" style="left:419px;top:909px;width:83px;letter-spacing:-0.45px">FEMALE</div><div class="c r" style="left:503px;top:909px;width:79px;letter-spacing:-0.11px">18.08.2023</div><div class="c" style="left:622px;top:909px;width:244px;letter-spacing:0.08px">30dcc7d5-4d3a-480f-8c90-fee6dcada586</div><div class="c" style="left:867px;top:909px;width:104px;letter-spacing:0.14px">Georg Bartas</div><div class="c" style="left:1124px;top:909px;width:78px;letter-spacing:0.43px">Done</div><div class="c" style="left:1203px;top:909px;width:143px">21.11.2023 6:01:00 AM</div><div class="c" style="left:1347px;top:909px;width:156px;letter-spacing:-0.08px">21.11.2023 12:01:00 PM</div><div class="c" style="left:1504px;top:909px;width:100px">6:0</div><div class="c" style="left:1605px;top:909px;width:82px;letter-spacing:-0.08px">6.00</div><div class="c" style="left:1688px;top:909px;width:58px;letter-spacing:0.55px">Patient</div><div class="c" style="left:1747px;top:909px;width:101px;letter-spacing:0.21px">Pflegefachassistenz</div><div class="c" style="left:1849px;top:909px;width:45px;letter-spacing:0.14px">Georg Bartas</div><div class="c r" style="left:22px;top:929px;width:52px;letter-spacing:-0.23px">184</div><div class="c ctr" style="left:75px;top:929px;width:55px;letter-spacing:-0.05px">WAHR</div><div class="c" style="left:210px;top:929px;width:97px;letter-spacing:0.63px">Marianne</div><div class="c" style="left:308px;top:929px;width:78px;letter-spacing:0.33px">Anna</div><div class="c" style="left:419px;top:929px;width:83px;letter-spacing:-0.45px">FEMALE</div><div class="c r" style="left:503px;top:929px;width:79px;letter-spacing:-0.11px">18.08.2023</div><div class="c" style="left:622px;top:929px;width:244px;letter-spacing:-0.05px">052cb663-7633-463e-a954-cc55fa4a838f</div><div class="c" style="left:867px;top:929px;width:104px;letter-spacing:0.14px">Georg Bartas</div><div class="c" style="left:1124px;top:929px;width:78px;letter-spacing:0.43px">Done</div><div class="c" style="left:1203px;top:929px;width:143px;letter-spacing:-0.07px">21.11.2023 5:02:00 PM</div><div class="c" style="left:1347px;top:929px;width:156px;letter-spacing:-0.07px">21.11.2023 9:02:00 PM</div><div class="c" style="left:1504px;top:929px;width:100px">4:0</div><div class="c" style="left:1605px;top:929px;width:82px;letter-spacing:-0.08px">4.00</div><div class="c" style="left:1688px;top:929px;width:58px;letter-spacing:0.55px">Patient</div><div class="c" style="left:1747px;top:929px;width:101px;letter-spacing:0.20px">Sonstige</div><div class="c" style="left:1849px;top:929px;width:45px;letter-spacing:0.14px">Georg Bartas</div><div class="c r" style="left:22px;top:949px;width:52px;letter-spacing:-0.23px">97</div><div class="c ctr" style="left:75px;top:949px;width:55px;letter-spacing:-0.05px">WAHR</div><div class="c" style="left:131px;top:949px;width:78px;letter-spacing:0.47px">Mag.</div><div class="c" style="left:210px;top:949px;width:97px;letter-spacing:0.35px">Gerd</div><div class="c" style="left:308px;top:949px;width:78px;letter-spacing:0.75px">Mader</div><div class="c r" style="left:503px;top:949px;width:79px;letter-spacing:-0.11px">15.05.1969</div><div class="c" style="left:622px;top:949px;width:244px;letter-spacing:0.06px">b07e1947-df5f-4822-b21a-b8c8f4971890</div><div class="c" style="left:867px;top:949px;width:151px;letter-spacing:-0.05px">Georg Bartas PFA</div><div class="c" style="left:1124px;top:949px;width:78px;letter-spacing:0.42px">Open</div><div class="c" style="left:1203px;top:949px;width:143px">27.10.2023 9:00:00 AM</div><div class="c" style="left:1347px;top:949px;width:156px">27.10.2023 9:45:00 AM</div><div class="c" style="left:1504px;top:949px;width:100px;letter-spacing:-0.08px">0:45</div><div class="c" style="left:1605px;top:949px;width:82px;letter-spacing:-0.08px">0.75</div><div class="c" style="left:1688px;top:949px;width:58px;letter-spacing:0.55px">Patient</div><div class="c" style="left:1747px;top:949px;width:101px;letter-spacing:0.21px">Pflegefachassistenz</div><div class="c" style="left:1849px;top:949px;width:45px;letter-spacing:0.14px">Georg Bartas</div><div class="c r" style="left:22px;top:969px;width:52px;letter-spacing:-0.23px">97</div><div class="c ctr" style="left:75px;top:969px;width:55px;letter-spacing:-0.05px">WAHR</div><div class="c" style="left:131px;top:969px;width:78px;letter-spacing:0.47px">Mag.</div><div class="c" style="left:210px;top:969px;width:97px;letter-spacing:0.35px">Gerd</div><div class="c" style="left:308px;top:969px;width:78px;letter-spacing:0.75px">Mader</div><div class="c r" style="left:503px;top:969px;width:79px;letter-spacing:-0.11px">15.05.1969</div><div class="c" style="left:622px;top:969px;width:244px;letter-spacing:0.06px">b07e1947-df5f-4822-b21a-b8c8f4971890</div><div class="c" style="left:867px;top:969px;width:151px;letter-spacing:-0.05px">Georg Bartas PFA</div><div class="c" style="left:1124px;top:969px;width:78px;letter-spacing:0.42px">Open</div><div class="c" style="left:1203px;top:969px;width:143px">27.10.2023 9:00:00 AM</div><div class="c" style="left:1347px;top:969px;width:156px">27.10.2023 9:45:00 AM</div><div class="c" style="left:1504px;top:969px;width:100px;letter-spacing:-0.08px">0:45</div><div class="c" style="left:1605px;top:969px;width:82px;letter-spacing:-0.08px">0.75</div><div class="c" style="left:1688px;top:969px;width:58px;letter-spacing:0.55px">Patient</div><div class="c" style="left:1747px;top:969px;width:101px;letter-spacing:0.21px">Pflegefachassistenz</div><div class="c" style="left:1849px;top:969px;width:45px;letter-spacing:0.14px">Georg Bartas</div></div><!-- selection J2 -->
<div class="abs" style="left:620px;top:227px;width:248px;height:22px;border:2px solid #217346"></div>
<div class="abs" style="left:864px;top:245px;width:6px;height:6px;background:#217346;border:1px solid #fff"></div>
<!-- vertical scrollbar -->
<div class="abs" style="left:1895px;top:186px;width:21px;height:797px;background:#efefef"></div>
<div class="abs" style="left:1894px;top:208px;width:1px;height:774px;background:#a8a8a8"></div>
<div class="abs" style="left:1898px;top:191px;width:15px;height:15px;background:#fff;border:1px solid #c6c6c6"></div>
<svg class="abs" style="left:1901px;top:195px" width="9" height="6"><path d="M0.5 5.5L4.5 0.5 8.5 5.5z" fill="#222"/></svg>
<div class="abs" style="left:1898px;top:206px;width:15px;height:377px;background:#fff;border:1px solid #9e9e9e"></div>
<div class="abs" style="left:1898px;top:967px;width:15px;height:15px;background:#fff;border:1px solid #c6c6c6"></div>
<svg class="abs" style="left:1901px;top:972px" width="9" height="6"><path d="M0.5 0.5L4.5 5.5 8.5 0.5z" fill="#222"/></svg>
<!-- sheet tab bar -->
<div class="abs" style="left:0;top:982px;width:1916px;height:28px;background:#e5e5e5;border-top:1px solid #c6c6c6"></div>
<svg class="abs" style="left:22px;top:991px" width="6" height="9"><path d="M5 0.5L1 4.5 5 8.5z" fill="#c4c4c4"/></svg>
<svg class="abs" style="left:50px;top:991px" width="6" height="9"><path d="M1 0.5L5 4.5 1 8.5z" fill="#c4c4c4"/></svg>
<div class="abs" style="left:96px;top:982px;width:92px;height:25px;background:#fff;border:1px solid #c6c6c6;border-top:none;border-bottom:2px solid #217346"></div>
<div class="t" style="left:108px;top:989px;font-size:13px;font-weight:bold;color:#217346">TaskExport</div>
<svg class="abs" style="left:220px;top:987px" width="17" height="17"><circle cx="8.5" cy="8.5" r="7.5" fill="none" stroke="#c4c4c4" stroke-width="1.2"/><path d="M8.5 4.5v8M4.5 8.5h8" stroke="#c4c4c4" stroke-width="1.2"/></svg>
<div class="abs" style="left:1148px;top:991px;width:2px;height:2px;background:#c4c4c4"></div>
<div class="abs" style="left:1148px;top:995px;width:2px;height:2px;background:#c4c4c4"></div>
<div class="abs" style="left:1148px;top:999px;width:2px;height:2px;background:#c4c4c4"></div>
<div class="abs" style="left:1165px;top:988px;width:727px;height:16px;background:#efefef"></div>
<div class="abs" style="left:1165px;top:988px;width:16px;height:16px;border:1px solid #c6c6c6;background:#fff"></div>
<svg class="abs" style="left:1170px;top:992px" width="6" height="9"><path d="M5 0.5L1 4.5 5 8.5z" fill="#222"/></svg>
<div class="abs" style="left:1180px;top:988px;width:475px;height:16px;background:#fff;border:1px solid #b9b9b9"></div>
<div class="abs" style="left:1876px;top:988px;width:16px;height:16px;border:1px solid #c6c6c6;background:#fff"></div>
<svg class="abs" style="left:1881px;top:992px" width="6" height="9"><path d="M1 0.5L5 4.5 1 8.5z" fill="#222"/></svg>
<!-- status bar -->
<div class="abs" style="left:0;top:1010px;width:1916px;height:22px;background:#f4f4f4;border-top:1px solid #fbfbfb"></div>
<div class="t" style="left:8px;top:1017px;font-size:11px;color:#333">Bereit</div>
<svg class="abs" style="left:54px;top:1012px" width="18" height="18" viewBox="0 0 18 18"><circle cx="7.9" cy="3.9" r="1.6" fill="none" stroke="#222" stroke-width="1.1"/><path d="M5.4 11.5V7.6L3.4 7.2C2.5 7 2.2 6 2.7 5.5 3.2 5 4 5 4.8 5.5L6.2 6.2H9.6L11 5.5C11.8 5 12.6 5 13.1 5.6 13.5 6.2 13 7 12.3 7.2L10.3 7.6V10.5" fill="none" stroke="#222" stroke-width="1.1"/><path d="M5.4 11.5C5.4 12.8 4.5 13.6 4.5 14.6 4.5 15.3 5.2 15.6 5.9 15.5" fill="none" stroke="#222" stroke-width="1.1"/><path d="M8.2 12.2L11.4 15.6 16.8 10.4" fill="none" stroke="#222" stroke-width="1.1"/></svg>
<div class="abs" style="left:1616px;top:1012px;width:40px;height:20px;background:#dedede"></div>
<svg class="abs" style="left:1629px;top:1014px" width="14" height="14"><path d="M1 1h12v12H1zM1 5h12M1 9h12M5 1v12M9 1v12" fill="none" stroke="#222" stroke-width="1.2"/></svg>
<svg class="abs" style="left:1669px;top:1014px" width="14" height="14"><rect x="1" y="1" width="12" height="12" fill="none" stroke="#222" stroke-width="1.2"/><rect x="3.5" y="3.5" width="7" height="7" fill="none" stroke="#222"/><path d="M5 5.5h4M5 7h4M5 8.5h4" stroke="#222" stroke-width=".8"/></svg>
<svg class="abs" style="left:1709px;top:1014px" width="14" height="14"><path d="M1 1h12v12H1zM5 1v5h4V1" fill="none" stroke="#bbb" stroke-width="1"/></svg>
<div class="abs" style="left:1742px;top:1020px;width:7px;height:1px;background:#333"></div>
<div class="abs" style="left:1755px;top:1020px;width:101px;height:1px;background:#8a8a8a"></div>
<div class="abs" style="left:1803px;top:1015px;width:5px;height:12px;background:#666"></div>
<div class="abs" style="left:1859px;top:1020px;width:9px;height:1px;background:#333"></div>
<div class="abs" style="left:1863px;top:1016px;width:1px;height:9px;background:#333"></div>
<div class="t" style="left:1880px;top:1016px;font-size:11px;color:#444">100%</div>
</body></html>
